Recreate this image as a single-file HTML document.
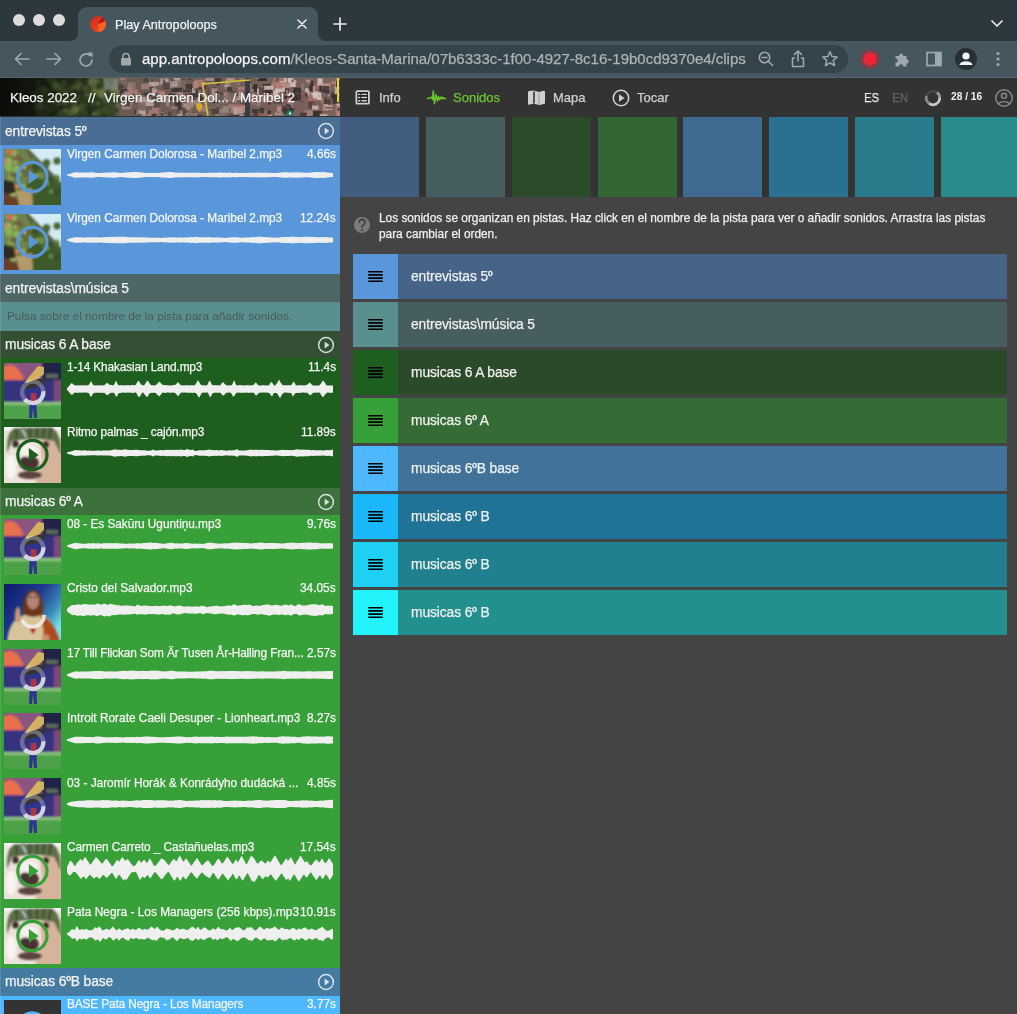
<!DOCTYPE html>
<html><head><meta charset="utf-8"><style>
html,body{margin:0;padding:0;width:1017px;height:1014px;overflow:hidden;background:#444;font-family:"Liberation Sans", sans-serif;}
.t{position:absolute;white-space:nowrap;line-height:1;-webkit-text-stroke:0.25px currentColor;will-change:transform;}
.o{font-size:0.6em;position:relative;top:-0.55em;margin-left:0;margin-right:-0.2px;letter-spacing:0;-webkit-text-stroke:0.5px currentColor;}
.r{position:absolute;display:block;}
</style></head><body>
<svg width="0" height="0" style="position:absolute"><defs><filter id="fb05" x="-20%" y="-20%" width="140%" height="140%"><feGaussianBlur stdDeviation="0.55"/></filter></defs></svg><div class="r" style="left:0.00px;top:0.00px;width:1017.00px;height:41.00px;background:#2c383d;"></div><div class="r" style="left:0.00px;top:41.00px;width:1017.00px;height:36.00px;background:#46565f;"></div><div class="r" style="left:0.00px;top:77.00px;width:1017.00px;height:1.00px;background:#56636b;"></div><div class="r" style="left:78.00px;top:7.00px;width:240.00px;height:34.00px;background:#46565f;border-radius:9px 9px 0 0"></div><svg class="r" style="left:70.00px;top:33.00px;" width="8" height="8" viewBox="0 0 8 8"><path d="M8 0 V8 H0 A8 8 0 0 0 8 0Z" fill="#46565f"/></svg><svg class="r" style="left:318.00px;top:33.00px;" width="8" height="8" viewBox="0 0 8 8"><path d="M0 0 V8 H8 A8 8 0 0 1 0 0Z" fill="#46565f"/></svg><div class="r" style="left:13.00px;top:14.00px;width:12.00px;height:12.00px;background:#dcdcdc;border-radius:50%"></div><div class="r" style="left:33.00px;top:14.00px;width:12.00px;height:12.00px;background:#dcdcdc;border-radius:50%"></div><div class="r" style="left:53.00px;top:14.00px;width:12.00px;height:12.00px;background:#dcdcdc;border-radius:50%"></div><svg class="r" style="left:90.00px;top:16.00px;" width="16" height="16" viewBox="0 0 16 16"><defs><linearGradient id="fv" x1="0" y1="0" x2="1" y2="1"><stop offset="0" stop-color="#c9241c"/><stop offset="1" stop-color="#f0552a"/></linearGradient></defs><circle cx="8" cy="8" r="8" fill="url(#fv)"/><path d="M8 8 L15.4 5 A8 8 0 0 1 9 15.9 L8 8Z" fill="#f4621f"/><path d="M8 8 L15.4 5 A8 8 0 0 0 12 1.1Z" fill="#b5161b"/></svg><div class="t" style="left:114.50px;top:19px;font-size:12.65px;color:#eef1f3;font-weight:normal;">Play Antropoloops</div><svg class="r" style="left:297.00px;top:19.00px;" width="10" height="10" viewBox="0 0 10 10"><path d="M1 1 L9 9 M9 1 L1 9" stroke="#e8ecee" stroke-width="1.6" stroke-linecap="round"/></svg><svg class="r" style="left:333.00px;top:17.00px;" width="14" height="14" viewBox="0 0 14 14"><path d="M7 1 V13 M1 7 H13" stroke="#e8ecee" stroke-width="1.7" stroke-linecap="round"/></svg><svg class="r" style="left:990.00px;top:19.00px;" width="14" height="10" viewBox="0 0 14 10"><path d="M2 2 L7 7 L12 2" stroke="#e8ecee" stroke-width="1.7" fill="none" stroke-linecap="round" stroke-linejoin="round"/></svg><svg class="r" style="left:13.00px;top:51.00px;" width="18" height="16" viewBox="0 0 18 16"><path d="M16 8 H3 M8 2.5 L2.5 8 L8 13.5" stroke="#9da8ae" stroke-width="1.7" fill="none" stroke-linecap="round" stroke-linejoin="round"/></svg><svg class="r" style="left:45.00px;top:51.00px;" width="18" height="16" viewBox="0 0 18 16"><path d="M2 8 H15 M10 2.5 L15.5 8 L10 13.5" stroke="#9da8ae" stroke-width="1.7" fill="none" stroke-linecap="round" stroke-linejoin="round"/></svg><svg class="r" style="left:78.00px;top:51.00px;" width="17" height="17" viewBox="0 0 17 17"><path d="M14 9 A6 6 0 1 1 12 4.5" stroke="#9da8ae" stroke-width="1.7" fill="none" stroke-linecap="round"/><path d="M9.5 1.5 L14.5 1.5 L14.5 6.5 Z" fill="#9da8ae"/></svg><div class="r" style="left:109.00px;top:45.00px;width:739.00px;height:28.00px;background:#35434a;border-radius:14px"></div><svg class="r" style="left:120.00px;top:52.00px;" width="12" height="14" viewBox="0 0 12 14"><path d="M3 6 V4.5 A3 3 0 0 1 9 4.5 V6" stroke="#9da8ae" stroke-width="1.6" fill="none"/><rect x="1" y="6" width="10" height="7.5" rx="1" fill="#9da8ae"/></svg><div class="t" style="left:142px;top:51px;font-size:15px;color:#a9b4ba"><span style="color:#f1f3f4">app.antropoloops.com</span>/Kleos-Santa-Marina/07b6333c-1f00-4927-8c16-19b0cd9370e4/clips</div><svg class="r" style="left:757.00px;top:50.00px;" width="18" height="18" viewBox="0 0 18 18"><circle cx="7.5" cy="7.5" r="5.2" stroke="#9da8ae" stroke-width="1.6" fill="none"/><path d="M5 7.5 H10 M11.3 11.3 L15.5 15.5" stroke="#9da8ae" stroke-width="1.6" stroke-linecap="round"/></svg><svg class="r" style="left:789.00px;top:49.00px;" width="18" height="20" viewBox="0 0 18 20"><path d="M9 2 V12 M5.5 5.5 L9 2 L12.5 5.5 M5.5 9 H3.5 V17.5 H14.5 V9 H12.5" stroke="#9da8ae" stroke-width="1.6" fill="none" stroke-linecap="round" stroke-linejoin="round"/></svg><svg class="r" style="left:821.00px;top:50.00px;" width="18" height="18" viewBox="0 0 18 18"><path d="M9 1.8 L11.1 6.6 L16.2 7 L12.3 10.4 L13.5 15.5 L9 12.8 L4.5 15.5 L5.7 10.4 L1.8 7 L6.9 6.6 Z" stroke="#9da8ae" stroke-width="1.5" fill="none" stroke-linejoin="round"/></svg><svg class="r" style="left:860.00px;top:49.00px;" width="20" height="20" viewBox="0 0 20 20"><circle cx="10" cy="10" r="8.6" fill="none" stroke="#b8263a" stroke-width="1.3"/><circle cx="10" cy="10" r="6.8" fill="#ee2334"/></svg><svg class="r" style="left:893.00px;top:50.00px;" width="18" height="18" viewBox="0 0 18 18"><path d="M2.5 6 H6 A2.2 2.2 0 1 1 10.4 6 H13.5 V9.2 A2.2 2.2 0 1 1 13.5 13.6 V16.5 H10.2 A2.2 2.2 0 1 0 5.8 16.5 H2.5 V12.8 A2.2 2.2 0 1 0 2.5 8.4 Z" fill="#9da8ae"/></svg><svg class="r" style="left:925.00px;top:50.00px;" width="18" height="18" viewBox="0 0 18 18"><rect x="2" y="2.5" width="14" height="13" fill="none" stroke="#9da8ae" stroke-width="1.7"/><rect x="10" y="2.5" width="6" height="13" fill="#9da8ae"/></svg><svg class="r" style="left:955.00px;top:48.00px;" width="22" height="22" viewBox="0 0 22 22"><circle cx="11" cy="11" r="11" fill="#263036"/><circle cx="11" cy="8" r="3.6" fill="#f1f3f4"/><path d="M4.5 16.5 A7 5 0 0 1 17.5 16.5 V17 H4.5Z" fill="#f1f3f4"/></svg><svg class="r" style="left:994.00px;top:50.00px;" width="8" height="18" viewBox="0 0 8 18"><circle cx="4" cy="3.5" r="1.6" fill="#9da8ae"/><circle cx="4" cy="9" r="1.6" fill="#9da8ae"/><circle cx="4" cy="14.5" r="1.6" fill="#9da8ae"/></svg><div class="r" style="left:0.00px;top:78.00px;width:1017.00px;height:936.00px;background:#444444;"></div><div class="r" style="left:340.00px;top:78.00px;width:677.00px;height:39.00px;background:#333333;"></div><svg class="r" style="left:354.00px;top:89.00px;" width="17" height="17" viewBox="0 0 17 17"><rect x="2.4" y="2.2" width="12.5" height="12.5" rx="1" fill="#202020" stroke="#d0d0d0" stroke-width="1.8"/><path d="M4.6 5.4 H5.8 M4.6 8.5 H5.8 M4.6 11.7 H5.8 M7.9 5.4 H12.4 M7.9 8.5 H12.4 M7.9 11.7 H12.4" stroke="#d0d0d0" stroke-width="1.4" stroke-linecap="round"/></svg><div class="t" style="left:378.60px;top:91px;font-size:13px;color:#d0d0d0;font-weight:normal;">Info</div><svg class="r" style="left:427.00px;top:88.00px;" width="20" height="18" viewBox="0 0 20 18"><path d="M0.3 10.4 L3 9.9 L4.6 9.2 L5.5 11.4 L6.3 3 L7.4 15.6 L9 6.6 L10.4 13 L11.5 8.6 L12.5 11.6 L14 9 L15 10.9 L16 9.3 L17 10.6 L18.6 10.4" stroke="#6cc62f" stroke-width="1.5" fill="none" stroke-linejoin="round" stroke-linecap="round"/></svg><div class="t" style="left:452.70px;top:91px;font-size:13px;color:#6cc62f;font-weight:normal;">Sonidos</div><svg class="r" style="left:527.00px;top:89.00px;" width="19" height="17" viewBox="0 0 19 17"><path d="M1 3.2 Q1 2.2 2 2 L6.5 1.5 L12 3 L16.5 1.7 Q18 1.5 18 2.7 V14 Q18 14.8 17 15 L12 16 L6.5 14.5 L2 15.8 Q1 16 1 15 Z" fill="#d0d0d0"/><path d="M7 2.5 V14.2" stroke="#333" stroke-width="1.6"/><path d="M12 3.5 V15.3" stroke="#8a8a8a" stroke-width="0.8"/></svg><div class="t" style="left:552.50px;top:91px;font-size:13px;color:#d0d0d0;font-weight:normal;">Mapa</div><svg class="r" style="left:612.00px;top:89.00px;" width="18" height="18" viewBox="0 0 18 18"><circle cx="9" cy="9" r="7.7" fill="none" stroke="#d0d0d0" stroke-width="1.6"/><path d="M7 5.3 L12.5 9 L7 12.7Z" fill="#d0d0d0"/></svg><div class="t" style="left:637.40px;top:91px;font-size:13px;color:#d0d0d0;font-weight:normal;">Tocar</div><div class="t" style="left:863.50px;top:91px;font-size:13.4px;color:#eeeeee;font-weight:normal;transform:scaleX(0.84);transform-origin:0 0">ES</div><div class="t" style="left:892.40px;top:91px;font-size:13.4px;color:#666666;font-weight:normal;transform:scaleX(0.86);transform-origin:0 0">EN</div><svg class="r" style="left:924.00px;top:89.00px;" width="18" height="18" viewBox="0 0 18 18"><circle cx="9" cy="9" r="6.7" fill="none" stroke="#4a4a4a" stroke-width="2.6"/><path d="M15.7 9 A6.7 6.7 0 0 1 5 14.4" fill="none" stroke="#c8c8c8" stroke-width="2.6"/><path d="M5 14.4 A6.7 6.7 0 0 1 2.5 7" fill="none" stroke="#8a8a8a" stroke-width="2.6"/><path d="M15.7 9 A6.7 6.7 0 0 0 13 3.5" fill="none" stroke="#9a9a9a" stroke-width="2.6"/></svg><div class="t" style="left:951.00px;top:92px;font-size:10.2px;color:#f0f0f0;font-weight:bold;-webkit-text-stroke:0">28 / 16</div><svg class="r" style="left:994.00px;top:88.00px;" width="20" height="20" viewBox="0 0 20 20"><circle cx="10" cy="10" r="8.2" fill="none" stroke="#8a8a8a" stroke-width="1.4"/><circle cx="10" cy="7.8" r="2.6" fill="none" stroke="#8a8a8a" stroke-width="1.4"/><path d="M4.5 15.5 A6.5 4 0 0 1 15.5 15.5" fill="none" stroke="#8a8a8a" stroke-width="1.4"/></svg><div class="r" style="left:340.00px;top:117.00px;width:677.00px;height:80.00px;background:#333333;"></div><div class="r" style="left:340.00px;top:117.00px;width:79.00px;height:80.00px;background:#435d80;"></div><div class="r" style="left:425.87px;top:117.00px;width:79.00px;height:80.00px;background:#445d5f;"></div><div class="r" style="left:511.74px;top:117.00px;width:79.00px;height:80.00px;background:#2c4b2b;"></div><div class="r" style="left:597.61px;top:117.00px;width:79.00px;height:80.00px;background:#336634;"></div><div class="r" style="left:683.48px;top:117.00px;width:79.00px;height:80.00px;background:#3e6b8f;"></div><div class="r" style="left:769.35px;top:117.00px;width:79.00px;height:80.00px;background:#2a7090;"></div><div class="r" style="left:855.22px;top:117.00px;width:79.00px;height:80.00px;background:#2a7c8c;"></div><div class="r" style="left:941.09px;top:117.00px;width:79.00px;height:80.00px;background:#2a8a8c;"></div><svg class="r" style="left:354.40px;top:217.40px;" width="16" height="16" viewBox="0 0 16 16"><circle cx="8" cy="8" r="8" fill="#7a7a7a"/><path d="M5.3 5.2 A2.8 2.8 0 1 1 9.6 7.6 Q8 8.6 8 10.3" fill="none" stroke="#3c3c3c" stroke-width="1.6" stroke-linecap="round"/><circle cx="8" cy="13" r="1" fill="#3c3c3c"/></svg><div class="t" style="left:378.50px;top:213px;font-size:11.85px;color:#f0f0f0;font-weight:normal;">Los sonidos se organizan en pistas. Haz click en el nombre de la pista para ver o añadir sonidos. Arrastra las pistas</div><div class="t" style="left:378.50px;top:229px;font-size:11.85px;color:#f0f0f0;font-weight:normal;">para cambiar el orden.</div><div class="r" style="left:353.00px;top:254.00px;width:45.00px;height:45.00px;background:#5a97da;"></div><div class="r" style="left:398.00px;top:254.00px;width:609.00px;height:45.00px;background:#456487;"></div><svg class="r" style="left:367.00px;top:270.00px;" width="17" height="13" viewBox="0 0 17 13"><path d="M1.8 1.70 H15.2" stroke="#000" stroke-width="1.6" stroke-linecap="round"/><path d="M1.8 4.90 H15.2" stroke="#000" stroke-width="1.6" stroke-linecap="round"/><path d="M1.8 8.10 H15.2" stroke="#000" stroke-width="1.6" stroke-linecap="round"/><path d="M1.8 11.30 H15.2" stroke="#000" stroke-width="1.6" stroke-linecap="round"/></svg><div class="t" style="left:410.70px;top:270px;font-size:13.8px;color:#f0f0f0;font-weight:normal;letter-spacing:-0.09px">entrevistas 5<span class="o">o</span></div><div class="r" style="left:353.00px;top:302.00px;width:45.00px;height:45.00px;background:#5a8f8f;"></div><div class="r" style="left:398.00px;top:302.00px;width:609.00px;height:45.00px;background:#475e60;"></div><svg class="r" style="left:367.00px;top:318.00px;" width="17" height="13" viewBox="0 0 17 13"><path d="M1.8 1.70 H15.2" stroke="#000" stroke-width="1.6" stroke-linecap="round"/><path d="M1.8 4.90 H15.2" stroke="#000" stroke-width="1.6" stroke-linecap="round"/><path d="M1.8 8.10 H15.2" stroke="#000" stroke-width="1.6" stroke-linecap="round"/><path d="M1.8 11.30 H15.2" stroke="#000" stroke-width="1.6" stroke-linecap="round"/></svg><div class="t" style="left:410.70px;top:318px;font-size:13.8px;color:#f0f0f0;font-weight:normal;letter-spacing:-0.09px">entrevistas\música 5</div><div class="r" style="left:353.00px;top:350.00px;width:45.00px;height:45.00px;background:#1e5e1e;"></div><div class="r" style="left:398.00px;top:350.00px;width:609.00px;height:45.00px;background:#2a4a2a;"></div><svg class="r" style="left:367.00px;top:366.00px;" width="17" height="13" viewBox="0 0 17 13"><path d="M1.8 1.70 H15.2" stroke="#000" stroke-width="1.6" stroke-linecap="round"/><path d="M1.8 4.90 H15.2" stroke="#000" stroke-width="1.6" stroke-linecap="round"/><path d="M1.8 8.10 H15.2" stroke="#000" stroke-width="1.6" stroke-linecap="round"/><path d="M1.8 11.30 H15.2" stroke="#000" stroke-width="1.6" stroke-linecap="round"/></svg><div class="t" style="left:410.70px;top:366px;font-size:13.8px;color:#f0f0f0;font-weight:normal;letter-spacing:-0.09px">musicas 6 A base</div><div class="r" style="left:353.00px;top:398.00px;width:45.00px;height:45.00px;background:#38a038;"></div><div class="r" style="left:398.00px;top:398.00px;width:609.00px;height:45.00px;background:#356b35;"></div><svg class="r" style="left:367.00px;top:414.00px;" width="17" height="13" viewBox="0 0 17 13"><path d="M1.8 1.70 H15.2" stroke="#000" stroke-width="1.6" stroke-linecap="round"/><path d="M1.8 4.90 H15.2" stroke="#000" stroke-width="1.6" stroke-linecap="round"/><path d="M1.8 8.10 H15.2" stroke="#000" stroke-width="1.6" stroke-linecap="round"/><path d="M1.8 11.30 H15.2" stroke="#000" stroke-width="1.6" stroke-linecap="round"/></svg><div class="t" style="left:410.70px;top:414px;font-size:13.8px;color:#f0f0f0;font-weight:normal;letter-spacing:-0.09px">musicas 6<span class="o">o</span> A</div><div class="r" style="left:353.00px;top:446.00px;width:45.00px;height:45.00px;background:#4db8ff;"></div><div class="r" style="left:398.00px;top:446.00px;width:609.00px;height:45.00px;background:#41739a;"></div><svg class="r" style="left:367.00px;top:462.00px;" width="17" height="13" viewBox="0 0 17 13"><path d="M1.8 1.70 H15.2" stroke="#000" stroke-width="1.6" stroke-linecap="round"/><path d="M1.8 4.90 H15.2" stroke="#000" stroke-width="1.6" stroke-linecap="round"/><path d="M1.8 8.10 H15.2" stroke="#000" stroke-width="1.6" stroke-linecap="round"/><path d="M1.8 11.30 H15.2" stroke="#000" stroke-width="1.6" stroke-linecap="round"/></svg><div class="t" style="left:410.70px;top:462px;font-size:13.8px;color:#f0f0f0;font-weight:normal;letter-spacing:-0.09px">musicas 6<span class="o">o</span>B base</div><div class="r" style="left:353.00px;top:494.00px;width:45.00px;height:45.00px;background:#1ab8f8;"></div><div class="r" style="left:398.00px;top:494.00px;width:609.00px;height:45.00px;background:#1f7396;"></div><svg class="r" style="left:367.00px;top:510.00px;" width="17" height="13" viewBox="0 0 17 13"><path d="M1.8 1.70 H15.2" stroke="#000" stroke-width="1.6" stroke-linecap="round"/><path d="M1.8 4.90 H15.2" stroke="#000" stroke-width="1.6" stroke-linecap="round"/><path d="M1.8 8.10 H15.2" stroke="#000" stroke-width="1.6" stroke-linecap="round"/><path d="M1.8 11.30 H15.2" stroke="#000" stroke-width="1.6" stroke-linecap="round"/></svg><div class="t" style="left:410.70px;top:510px;font-size:13.8px;color:#f0f0f0;font-weight:normal;letter-spacing:-0.09px">musicas 6<span class="o">o</span> B</div><div class="r" style="left:353.00px;top:542.00px;width:45.00px;height:45.00px;background:#1fd0f5;"></div><div class="r" style="left:398.00px;top:542.00px;width:609.00px;height:45.00px;background:#20808f;"></div><svg class="r" style="left:367.00px;top:558.00px;" width="17" height="13" viewBox="0 0 17 13"><path d="M1.8 1.70 H15.2" stroke="#000" stroke-width="1.6" stroke-linecap="round"/><path d="M1.8 4.90 H15.2" stroke="#000" stroke-width="1.6" stroke-linecap="round"/><path d="M1.8 8.10 H15.2" stroke="#000" stroke-width="1.6" stroke-linecap="round"/><path d="M1.8 11.30 H15.2" stroke="#000" stroke-width="1.6" stroke-linecap="round"/></svg><div class="t" style="left:410.70px;top:558px;font-size:13.8px;color:#f0f0f0;font-weight:normal;letter-spacing:-0.09px">musicas 6<span class="o">o</span> B</div><div class="r" style="left:353.00px;top:590.00px;width:45.00px;height:45.00px;background:#22f2fa;"></div><div class="r" style="left:398.00px;top:590.00px;width:609.00px;height:45.00px;background:#21908f;"></div><svg class="r" style="left:367.00px;top:606.00px;" width="17" height="13" viewBox="0 0 17 13"><path d="M1.8 1.70 H15.2" stroke="#000" stroke-width="1.6" stroke-linecap="round"/><path d="M1.8 4.90 H15.2" stroke="#000" stroke-width="1.6" stroke-linecap="round"/><path d="M1.8 8.10 H15.2" stroke="#000" stroke-width="1.6" stroke-linecap="round"/><path d="M1.8 11.30 H15.2" stroke="#000" stroke-width="1.6" stroke-linecap="round"/></svg><div class="t" style="left:410.70px;top:606px;font-size:13.8px;color:#f0f0f0;font-weight:normal;letter-spacing:-0.09px">musicas 6<span class="o">o</span> B</div><svg class="r" style="left:0;top:78px" width="340" height="38" viewBox="0 0 340 38">
<defs><filter id="hb" x="0" y="0" width="100%" height="100%"><feGaussianBlur stdDeviation="0.7"/></filter>
<filter id="hb2" x="-10%" y="-10%" width="120%" height="120%"><feGaussianBlur stdDeviation="1.2"/></filter>
<linearGradient id="hg" x1="0" y1="0" x2="1" y2="0"><stop offset="0" stop-color="#0a0b09"/><stop offset="0.12" stop-color="#151a10"/><stop offset="0.2" stop-color="#1e2616"/><stop offset="0.33" stop-color="#34402a"/><stop offset="0.35" stop-color="#6a5a52"/><stop offset="1" stop-color="#7a635c"/></linearGradient></defs>
<rect width="340" height="38" fill="url(#hg)"/><g filter="url(#hb2)"><circle cx="55.2" cy="20.7" r="2.8" fill="#6a7a44" opacity="0.35"/><circle cx="75.3" cy="22.1" r="3.6" fill="#48582e" opacity="0.55"/><circle cx="57.0" cy="8.9" r="5.0" fill="#48582e" opacity="0.37"/><circle cx="81.0" cy="20.9" r="2.9" fill="#2a3a1c" opacity="0.61"/><circle cx="54.7" cy="5.8" r="4.7" fill="#48582e" opacity="0.35"/><circle cx="98.0" cy="25.5" r="1.7" fill="#6a7a44" opacity="0.78"/><circle cx="38.6" cy="29.6" r="4.4" fill="#5a6a3a" opacity="0.20"/><circle cx="75.2" cy="27.3" r="4.6" fill="#1e2a14" opacity="0.55"/><circle cx="102.0" cy="16.2" r="4.0" fill="#6a7a44" opacity="0.80"/><circle cx="72.8" cy="35.6" r="4.6" fill="#3a4a26" opacity="0.53"/><circle cx="38.1" cy="18.8" r="2.4" fill="#1e2a14" opacity="0.20"/><circle cx="72.1" cy="23.8" r="2.6" fill="#6a7a44" opacity="0.52"/><circle cx="105.8" cy="21.8" r="3.4" fill="#48582e" opacity="0.80"/><circle cx="84.7" cy="34.4" r="3.9" fill="#3a4a26" opacity="0.65"/><circle cx="107.8" cy="37.7" r="3.8" fill="#2a3a1c" opacity="0.80"/><circle cx="94.4" cy="12.4" r="3.4" fill="#6a7a44" opacity="0.74"/><circle cx="83.4" cy="27.1" r="2.2" fill="#6a7a44" opacity="0.63"/><circle cx="57.7" cy="4.7" r="3.2" fill="#1e2a14" opacity="0.38"/><circle cx="119.1" cy="3.4" r="4.3" fill="#48582e" opacity="0.80"/><circle cx="111.3" cy="0.8" r="3.0" fill="#48582e" opacity="0.80"/><circle cx="109.2" cy="1.7" r="3.7" fill="#3a4a26" opacity="0.80"/><circle cx="67.1" cy="22.3" r="3.4" fill="#5a6a3a" opacity="0.47"/><circle cx="78.0" cy="37.9" r="2.6" fill="#3a4a26" opacity="0.58"/><circle cx="44.2" cy="20.4" r="4.8" fill="#48582e" opacity="0.24"/><circle cx="59.8" cy="10.0" r="3.9" fill="#5a6a3a" opacity="0.40"/><circle cx="61.7" cy="36.4" r="4.6" fill="#48582e" opacity="0.42"/><circle cx="67.0" cy="33.1" r="2.9" fill="#6a7a44" opacity="0.47"/><circle cx="92.9" cy="3.9" r="4.9" fill="#6a7a44" opacity="0.73"/><circle cx="58.1" cy="24.1" r="4.0" fill="#5a6a3a" opacity="0.38"/><circle cx="72.2" cy="9.8" r="2.6" fill="#5a6a3a" opacity="0.52"/><circle cx="36.0" cy="15.8" r="3.5" fill="#3a4a26" opacity="0.20"/><circle cx="67.0" cy="22.4" r="2.0" fill="#1e2a14" opacity="0.47"/><circle cx="88.3" cy="17.7" r="3.9" fill="#5a6a3a" opacity="0.68"/><circle cx="86.8" cy="10.6" r="3.2" fill="#6a7a44" opacity="0.67"/><circle cx="40.1" cy="25.7" r="4.9" fill="#5a6a3a" opacity="0.20"/><circle cx="88.4" cy="11.3" r="3.6" fill="#2a3a1c" opacity="0.68"/><circle cx="65.9" cy="11.9" r="2.8" fill="#6a7a44" opacity="0.46"/><circle cx="57.5" cy="29.9" r="1.9" fill="#3a4a26" opacity="0.37"/><circle cx="117.6" cy="26.0" r="2.0" fill="#6a7a44" opacity="0.80"/><circle cx="53.9" cy="30.5" r="2.3" fill="#2a3a1c" opacity="0.34"/><circle cx="92.6" cy="24.7" r="1.8" fill="#6a7a44" opacity="0.73"/><circle cx="62.4" cy="12.7" r="4.4" fill="#48582e" opacity="0.42"/><circle cx="103.8" cy="36.5" r="1.8" fill="#1e2a14" opacity="0.80"/><circle cx="90.3" cy="33.6" r="3.1" fill="#2a3a1c" opacity="0.70"/><circle cx="101.9" cy="1.3" r="4.9" fill="#5a6a3a" opacity="0.80"/><circle cx="103.6" cy="31.9" r="2.1" fill="#5a6a3a" opacity="0.80"/><circle cx="63.9" cy="31.5" r="1.8" fill="#6a7a44" opacity="0.44"/><circle cx="64.3" cy="4.9" r="2.5" fill="#5a6a3a" opacity="0.44"/><circle cx="74.5" cy="24.1" r="2.5" fill="#6a7a44" opacity="0.55"/><circle cx="69.8" cy="35.0" r="2.0" fill="#3a4a26" opacity="0.50"/><circle cx="75.6" cy="31.6" r="3.7" fill="#6a7a44" opacity="0.56"/><circle cx="71.9" cy="36.1" r="4.7" fill="#2a3a1c" opacity="0.52"/><circle cx="37.7" cy="17.4" r="4.1" fill="#1e2a14" opacity="0.20"/><circle cx="79.1" cy="11.0" r="2.7" fill="#2a3a1c" opacity="0.59"/><circle cx="108.2" cy="32.6" r="4.9" fill="#3a4a26" opacity="0.80"/><circle cx="103.9" cy="1.7" r="4.7" fill="#1e2a14" opacity="0.80"/><circle cx="78.5" cy="7.5" r="4.6" fill="#48582e" opacity="0.59"/><circle cx="84.0" cy="0.5" r="4.1" fill="#2a3a1c" opacity="0.64"/><circle cx="77.8" cy="9.1" r="1.6" fill="#6a7a44" opacity="0.58"/><circle cx="70.2" cy="35.7" r="3.6" fill="#5a6a3a" opacity="0.50"/><circle cx="45.7" cy="36.9" r="3.4" fill="#3a4a26" opacity="0.26"/><circle cx="64.9" cy="7.5" r="3.4" fill="#3a4a26" opacity="0.45"/><circle cx="49.6" cy="30.1" r="4.7" fill="#2a3a1c" opacity="0.30"/><circle cx="105.0" cy="0.3" r="3.7" fill="#48582e" opacity="0.80"/><circle cx="39.2" cy="10.3" r="2.4" fill="#6a7a44" opacity="0.20"/><circle cx="79.2" cy="1.9" r="2.6" fill="#3a4a26" opacity="0.59"/><circle cx="107.8" cy="29.5" r="1.7" fill="#3a4a26" opacity="0.80"/><circle cx="40.8" cy="37.0" r="4.5" fill="#3a4a26" opacity="0.21"/><circle cx="78.8" cy="18.6" r="2.0" fill="#3a4a26" opacity="0.59"/><circle cx="64.9" cy="24.6" r="3.6" fill="#5a6a3a" opacity="0.45"/><circle cx="57.5" cy="37.5" r="3.0" fill="#2a3a1c" opacity="0.38"/><circle cx="82.2" cy="27.2" r="2.8" fill="#3a4a26" opacity="0.62"/><circle cx="83.2" cy="1.6" r="3.1" fill="#1e2a14" opacity="0.63"/><circle cx="101.5" cy="14.5" r="4.3" fill="#6a7a44" opacity="0.80"/><circle cx="110.4" cy="2.0" r="3.7" fill="#1e2a14" opacity="0.80"/><circle cx="61.8" cy="36.1" r="3.0" fill="#3a4a26" opacity="0.42"/><circle cx="55.8" cy="20.4" r="3.9" fill="#3a4a26" opacity="0.36"/><circle cx="103.3" cy="8.5" r="2.0" fill="#3a4a26" opacity="0.80"/><circle cx="114.6" cy="14.2" r="4.6" fill="#5a6a3a" opacity="0.80"/><circle cx="45.3" cy="26.2" r="4.8" fill="#1e2a14" opacity="0.25"/><circle cx="91.3" cy="33.7" r="4.3" fill="#1e2a14" opacity="0.71"/><circle cx="44.2" cy="12.1" r="3.4" fill="#6a7a44" opacity="0.24"/><circle cx="95.9" cy="18.0" r="2.3" fill="#48582e" opacity="0.76"/><circle cx="38.8" cy="3.5" r="1.8" fill="#48582e" opacity="0.20"/><circle cx="50.2" cy="0.9" r="4.4" fill="#3a4a26" opacity="0.30"/><circle cx="37.2" cy="4.4" r="3.2" fill="#1e2a14" opacity="0.20"/><circle cx="116.0" cy="22.0" r="4.3" fill="#3a4a26" opacity="0.80"/><circle cx="119.7" cy="21.4" r="3.4" fill="#2a3a1c" opacity="0.80"/><circle cx="44.1" cy="28.5" r="4.8" fill="#3a4a26" opacity="0.24"/><circle cx="81.8" cy="33.0" r="2.1" fill="#3a4a26" opacity="0.62"/><circle cx="55.6" cy="6.8" r="2.4" fill="#6a7a44" opacity="0.36"/><circle cx="94.5" cy="35.8" r="2.4" fill="#6a7a44" opacity="0.75"/><circle cx="68.7" cy="13.3" r="3.0" fill="#3a4a26" opacity="0.49"/><circle cx="66.9" cy="8.9" r="4.8" fill="#1e2a14" opacity="0.47"/><circle cx="117.2" cy="15.8" r="3.5" fill="#6a7a44" opacity="0.80"/><circle cx="92.3" cy="19.6" r="3.2" fill="#1e2a14" opacity="0.72"/><circle cx="69.1" cy="33.7" r="2.1" fill="#48582e" opacity="0.49"/><circle cx="98.6" cy="34.8" r="3.3" fill="#48582e" opacity="0.79"/><circle cx="84.8" cy="32.6" r="2.0" fill="#2a3a1c" opacity="0.65"/><circle cx="47.5" cy="19.6" r="4.8" fill="#1e2a14" opacity="0.27"/><circle cx="80.7" cy="29.6" r="3.8" fill="#48582e" opacity="0.61"/><circle cx="85.6" cy="22.2" r="4.9" fill="#2a3a1c" opacity="0.66"/><circle cx="61.1" cy="10.2" r="4.3" fill="#2a3a1c" opacity="0.41"/><circle cx="49.6" cy="13.7" r="2.6" fill="#2a3a1c" opacity="0.30"/><circle cx="70.6" cy="26.5" r="4.0" fill="#2a3a1c" opacity="0.51"/><circle cx="74.8" cy="31.7" r="4.4" fill="#6a7a44" opacity="0.55"/><circle cx="37.4" cy="37.7" r="1.8" fill="#48582e" opacity="0.20"/><circle cx="101.6" cy="33.5" r="1.7" fill="#2a3a1c" opacity="0.80"/><circle cx="110.7" cy="24.6" r="4.2" fill="#3a4a26" opacity="0.80"/><circle cx="116.5" cy="32.4" r="2.3" fill="#2a3a1c" opacity="0.80"/><rect x="104" y="0" width="14" height="12" fill="#a8aca4" opacity="0.55"/></g><g filter="url(#hb)"><rect x="290.2" y="2.8" width="7.0" height="6.1" fill="#a87a70" opacity="0.85"/><rect x="317.7" y="7.7" width="8.9" height="3.9" fill="#976a60" opacity="0.85"/><rect x="138.2" y="30.6" width="2.9" height="3.6" fill="#b89088" opacity="0.85"/><rect x="126.0" y="16.0" width="7.9" height="4.0" fill="#6a5e58" opacity="0.85"/><rect x="192.3" y="15.3" width="5.9" height="3.3" fill="#4a4040" opacity="0.85"/><rect x="282.8" y="17.6" width="3.0" height="3.9" fill="#7a5a53" opacity="0.85"/><rect x="134.9" y="15.2" width="5.5" height="5.2" fill="#b89088" opacity="0.85"/><rect x="139.5" y="36.5" width="5.0" height="6.6" fill="#9a8a80" opacity="0.85"/><rect x="183.6" y="25.4" width="7.2" height="6.8" fill="#b89088" opacity="0.85"/><rect x="141.8" y="36.7" width="4.7" height="5.4" fill="#c0a8a0" opacity="0.85"/><rect x="143.2" y="17.7" width="4.8" height="6.3" fill="#b07a74" opacity="0.85"/><rect x="279.6" y="28.2" width="7.2" height="6.4" fill="#4e3a38" opacity="0.85"/><rect x="157.8" y="34.4" width="7.2" height="2.7" fill="#c0a8a0" opacity="0.85"/><rect x="149.4" y="10.9" width="7.8" height="5.6" fill="#c0a8a0" opacity="0.85"/><rect x="184.7" y="4.8" width="5.9" height="6.7" fill="#8a7a70" opacity="0.85"/><rect x="141.8" y="4.6" width="6.4" height="5.5" fill="#7a6a60" opacity="0.85"/><rect x="197.7" y="8.2" width="5.1" height="7.2" fill="#6a5e58" opacity="0.85"/><rect x="224.3" y="8.4" width="7.6" height="5.1" fill="#3a3434" opacity="0.85"/><rect x="327.8" y="15.8" width="8.5" height="2.4" fill="#b07a70" opacity="0.85"/><rect x="306.0" y="1.7" width="4.2" height="2.6" fill="#c09088" opacity="0.85"/><rect x="243.3" y="35.2" width="2.9" height="6.2" fill="#4a4040" opacity="0.85"/><rect x="210.5" y="28.2" width="8.5" height="6.5" fill="#4a4040" opacity="0.85"/><rect x="253.0" y="33.1" width="8.4" height="5.3" fill="#4e3a38" opacity="0.85"/><rect x="244.2" y="5.5" width="4.0" height="6.7" fill="#6a5e58" opacity="0.85"/><rect x="305.0" y="15.7" width="5.3" height="6.9" fill="#2e2a2a" opacity="0.85"/><rect x="240.7" y="21.5" width="7.1" height="7.9" fill="#b07a74" opacity="0.85"/><rect x="274.9" y="34.6" width="7.3" height="2.2" fill="#c8b8b0" opacity="0.85"/><rect x="279.4" y="-2.9" width="8.2" height="6.0" fill="#b07a70" opacity="0.85"/><rect x="156.4" y="23.3" width="3.6" height="6.7" fill="#5a4a48" opacity="0.85"/><rect x="126.2" y="18.0" width="7.2" height="4.7" fill="#4a4040" opacity="0.85"/><rect x="180.9" y="24.6" width="3.2" height="4.8" fill="#8a7a70" opacity="0.85"/><rect x="256.4" y="-0.9" width="4.9" height="3.4" fill="#c09088" opacity="0.85"/><rect x="228.7" y="-2.2" width="4.7" height="4.0" fill="#3a3434" opacity="0.85"/><rect x="272.2" y="2.6" width="8.9" height="5.6" fill="#a87a70" opacity="0.85"/><rect x="276.9" y="28.1" width="4.7" height="6.8" fill="#c09088" opacity="0.85"/><rect x="309.2" y="15.4" width="8.1" height="4.9" fill="#c09088" opacity="0.85"/><rect x="292.7" y="14.2" width="8.8" height="6.2" fill="#976a60" opacity="0.85"/><rect x="228.4" y="26.4" width="6.3" height="4.5" fill="#b07a74" opacity="0.85"/><rect x="226.6" y="-2.0" width="5.7" height="6.1" fill="#9a8a80" opacity="0.85"/><rect x="158.1" y="34.8" width="7.8" height="4.2" fill="#3a3434" opacity="0.85"/><rect x="217.4" y="12.2" width="5.2" height="7.8" fill="#5a4a48" opacity="0.85"/><rect x="175.4" y="12.5" width="8.8" height="5.2" fill="#a08078" opacity="0.85"/><rect x="164.5" y="4.2" width="5.2" height="3.0" fill="#6a5e58" opacity="0.85"/><rect x="148.9" y="22.6" width="5.5" height="3.1" fill="#6a5e58" opacity="0.85"/><rect x="207.5" y="10.3" width="2.3" height="6.3" fill="#5a4a48" opacity="0.85"/><rect x="207.5" y="13.7" width="2.2" height="7.8" fill="#5a4a48" opacity="0.85"/><rect x="171.6" y="13.3" width="3.5" height="4.0" fill="#8a7a70" opacity="0.85"/><rect x="194.9" y="2.2" width="2.4" height="6.4" fill="#b89088" opacity="0.85"/><rect x="335.8" y="36.6" width="8.3" height="7.8" fill="#b07a70" opacity="0.85"/><rect x="173.5" y="8.2" width="8.5" height="5.8" fill="#3a3434" opacity="0.85"/><rect x="188.4" y="-0.6" width="5.5" height="2.5" fill="#4a4040" opacity="0.85"/><rect x="118.8" y="-1.7" width="2.7" height="3.0" fill="#6a5e58" opacity="0.85"/><rect x="225.0" y="4.9" width="6.1" height="4.0" fill="#9a8a80" opacity="0.85"/><rect x="193.5" y="17.1" width="4.8" height="6.0" fill="#7a6a60" opacity="0.85"/><rect x="185.6" y="22.5" width="9.6" height="2.5" fill="#b89088" opacity="0.85"/><rect x="158.9" y="14.3" width="6.1" height="5.3" fill="#c0a8a0" opacity="0.85"/><rect x="269.0" y="36.0" width="3.4" height="6.4" fill="#976a60" opacity="0.85"/><rect x="303.5" y="20.2" width="9.4" height="4.2" fill="#976a60" opacity="0.85"/><rect x="215.3" y="15.7" width="7.6" height="4.1" fill="#a08078" opacity="0.85"/><rect x="230.6" y="28.6" width="9.3" height="6.2" fill="#9a8a80" opacity="0.85"/><rect x="127.5" y="4.2" width="8.0" height="6.9" fill="#8a7a70" opacity="0.85"/><rect x="286.4" y="25.4" width="2.8" height="3.4" fill="#3a3434" opacity="0.85"/><rect x="130.5" y="22.7" width="2.4" height="4.8" fill="#b07a74" opacity="0.85"/><rect x="192.1" y="12.5" width="2.6" height="4.4" fill="#8a7a70" opacity="0.85"/><rect x="193.1" y="10.1" width="5.6" height="6.9" fill="#5a4a48" opacity="0.85"/><rect x="171.4" y="-0.9" width="3.2" height="5.9" fill="#4a4040" opacity="0.85"/><rect x="336.7" y="1.7" width="4.3" height="3.3" fill="#8a8078" opacity="0.85"/><rect x="232.5" y="18.2" width="9.3" height="3.9" fill="#c0a8a0" opacity="0.85"/><rect x="291.6" y="16.6" width="7.0" height="2.2" fill="#c09088" opacity="0.85"/><rect x="250.8" y="33.1" width="2.8" height="7.7" fill="#7a5a53" opacity="0.85"/><rect x="137.0" y="16.5" width="3.8" height="7.0" fill="#4a4040" opacity="0.85"/><rect x="142.2" y="17.4" width="7.3" height="6.2" fill="#7a6a60" opacity="0.85"/><rect x="251.9" y="15.7" width="2.9" height="7.0" fill="#d8c8c8" opacity="0.85"/><rect x="216.5" y="12.9" width="2.9" height="2.0" fill="#b89088" opacity="0.85"/><rect x="279.6" y="0.2" width="4.8" height="4.9" fill="#c09088" opacity="0.85"/><rect x="323.1" y="25.8" width="4.9" height="6.7" fill="#c09088" opacity="0.85"/><rect x="252.5" y="6.0" width="4.8" height="8.0" fill="#2e2a2a" opacity="0.85"/><rect x="170.4" y="15.4" width="4.0" height="3.9" fill="#5a4a48" opacity="0.85"/><rect x="279.3" y="33.7" width="9.9" height="5.7" fill="#8a8078" opacity="0.85"/><rect x="307.3" y="12.4" width="3.5" height="5.7" fill="#976a60" opacity="0.85"/><rect x="225.5" y="29.5" width="5.3" height="8.0" fill="#6a5e58" opacity="0.85"/><rect x="182.8" y="36.2" width="3.5" height="2.6" fill="#a08078" opacity="0.85"/><rect x="183.3" y="18.8" width="7.1" height="2.2" fill="#5a4a48" opacity="0.85"/><rect x="179.3" y="15.2" width="4.8" height="6.5" fill="#b89088" opacity="0.85"/><rect x="149.7" y="15.7" width="9.3" height="4.7" fill="#5a4a48" opacity="0.85"/><rect x="152.0" y="29.0" width="7.6" height="7.9" fill="#b07a74" opacity="0.85"/><rect x="200.7" y="3.8" width="4.5" height="4.8" fill="#c0a8a0" opacity="0.85"/><rect x="339.7" y="6.3" width="9.7" height="3.7" fill="#a87a70" opacity="0.85"/><rect x="220.8" y="34.2" width="8.5" height="3.8" fill="#5a4a48" opacity="0.85"/><rect x="324.5" y="18.8" width="2.1" height="5.8" fill="#4e3a38" opacity="0.85"/><rect x="237.0" y="4.0" width="2.4" height="3.2" fill="#9a8a80" opacity="0.85"/><rect x="196.8" y="37.6" width="4.9" height="5.3" fill="#9a8a80" opacity="0.85"/><rect x="159.1" y="-2.4" width="5.5" height="4.0" fill="#6a5e58" opacity="0.85"/><rect x="252.0" y="31.1" width="5.6" height="3.6" fill="#3a3434" opacity="0.85"/><rect x="296.1" y="14.6" width="4.1" height="2.3" fill="#976a60" opacity="0.85"/><rect x="126.3" y="38.8" width="3.3" height="6.6" fill="#4a4040" opacity="0.85"/><rect x="172.9" y="2.7" width="8.1" height="6.7" fill="#c0a8a0" opacity="0.85"/><rect x="284.6" y="11.2" width="3.1" height="2.1" fill="#a87a70" opacity="0.85"/><rect x="121.8" y="24.0" width="9.2" height="7.4" fill="#9a8a80" opacity="0.85"/><rect x="233.7" y="28.7" width="8.9" height="7.9" fill="#c0a8a0" opacity="0.85"/><rect x="210.0" y="18.8" width="3.4" height="3.1" fill="#b07a74" opacity="0.85"/><rect x="149.0" y="32.0" width="2.8" height="6.6" fill="#9a8a80" opacity="0.85"/><rect x="219.0" y="30.7" width="5.6" height="7.8" fill="#a08078" opacity="0.85"/><rect x="246.1" y="2.9" width="2.3" height="4.9" fill="#5a4a48" opacity="0.85"/><rect x="301.7" y="36.1" width="6.9" height="2.2" fill="#d8c8c8" opacity="0.85"/><rect x="250.7" y="1.9" width="3.0" height="6.7" fill="#7a5a53" opacity="0.85"/><rect x="140.7" y="25.1" width="5.0" height="5.1" fill="#b07a74" opacity="0.85"/><rect x="217.4" y="10.1" width="4.8" height="5.9" fill="#7a6a60" opacity="0.85"/><rect x="188.2" y="8.4" width="9.6" height="7.7" fill="#3a3434" opacity="0.85"/><rect x="253.5" y="20.3" width="2.3" height="4.5" fill="#976a60" opacity="0.85"/><rect x="335.6" y="0.3" width="3.8" height="3.2" fill="#c09088" opacity="0.85"/><rect x="273.0" y="1.8" width="7.1" height="2.7" fill="#a87a70" opacity="0.85"/><rect x="327.2" y="37.9" width="7.5" height="4.6" fill="#b07a70" opacity="0.85"/><rect x="220.5" y="9.2" width="6.5" height="3.0" fill="#9a8a80" opacity="0.85"/><rect x="330.6" y="3.1" width="9.2" height="3.1" fill="#b07a70" opacity="0.85"/><rect x="267.8" y="24.2" width="3.1" height="2.3" fill="#3a3434" opacity="0.85"/><rect x="157.1" y="5.0" width="8.6" height="7.2" fill="#6a5e58" opacity="0.85"/><rect x="234.3" y="3.4" width="3.7" height="6.7" fill="#7a6a60" opacity="0.85"/><rect x="204.6" y="38.5" width="4.2" height="2.8" fill="#a08078" opacity="0.85"/><rect x="183.5" y="13.1" width="9.5" height="5.6" fill="#5a4a48" opacity="0.85"/><rect x="119.6" y="12.6" width="3.1" height="4.9" fill="#8a7a70" opacity="0.85"/><rect x="196.7" y="36.9" width="5.9" height="6.2" fill="#3a3434" opacity="0.85"/><rect x="222.9" y="28.1" width="6.2" height="7.1" fill="#9a8a80" opacity="0.85"/><rect x="244.3" y="16.5" width="6.3" height="4.7" fill="#c0a8a0" opacity="0.85"/><rect x="219.3" y="13.1" width="8.1" height="3.8" fill="#a08078" opacity="0.85"/><rect x="184.8" y="33.1" width="9.7" height="3.9" fill="#5a4a48" opacity="0.85"/><rect x="146.9" y="22.4" width="2.5" height="5.7" fill="#a08078" opacity="0.85"/><rect x="143.4" y="-2.4" width="9.0" height="6.8" fill="#4a4040" opacity="0.85"/><rect x="270.2" y="19.1" width="8.1" height="2.6" fill="#8a8078" opacity="0.85"/><rect x="247.0" y="10.7" width="6.7" height="3.3" fill="#9a8a80" opacity="0.85"/><rect x="230.4" y="12.7" width="4.5" height="4.2" fill="#4a4040" opacity="0.85"/><rect x="289.2" y="27.4" width="4.8" height="6.1" fill="#2e2a2a" opacity="0.85"/><rect x="181.7" y="38.0" width="4.2" height="2.7" fill="#c0a8a0" opacity="0.85"/><rect x="167.1" y="38.8" width="7.8" height="3.5" fill="#7a6a60" opacity="0.85"/><rect x="332.7" y="16.0" width="5.8" height="5.2" fill="#4e3a38" opacity="0.85"/><rect x="337.0" y="19.2" width="5.5" height="5.7" fill="#c09088" opacity="0.85"/><rect x="210.7" y="20.1" width="6.9" height="3.7" fill="#5a4a48" opacity="0.85"/><rect x="307.7" y="13.1" width="9.9" height="4.2" fill="#c8b8b0" opacity="0.85"/><rect x="130.3" y="17.8" width="2.9" height="6.4" fill="#7a6a60" opacity="0.85"/><rect x="275.9" y="12.2" width="4.4" height="5.0" fill="#976a60" opacity="0.85"/><rect x="215.5" y="35.1" width="7.5" height="2.6" fill="#9a8a80" opacity="0.85"/><rect x="150.5" y="6.2" width="5.0" height="5.7" fill="#a08078" opacity="0.85"/><rect x="314.5" y="5.8" width="5.5" height="3.2" fill="#a87a70" opacity="0.85"/><rect x="237.6" y="35.7" width="6.3" height="6.4" fill="#5a4a48" opacity="0.85"/><rect x="216.0" y="25.7" width="3.0" height="7.3" fill="#7a6a60" opacity="0.85"/><rect x="167.9" y="2.8" width="4.5" height="5.3" fill="#8a7a70" opacity="0.85"/><rect x="300.8" y="22.2" width="2.7" height="2.2" fill="#2e2a2a" opacity="0.85"/><rect x="203.0" y="17.6" width="9.9" height="4.8" fill="#a08078" opacity="0.85"/><rect x="204.3" y="18.5" width="5.5" height="5.8" fill="#b07a74" opacity="0.85"/><rect x="184.1" y="9.1" width="7.1" height="6.5" fill="#8a7a70" opacity="0.85"/><rect x="132.3" y="33.8" width="8.0" height="3.9" fill="#6a5e58" opacity="0.85"/><rect x="190.0" y="35.3" width="7.1" height="2.6" fill="#b07a74" opacity="0.85"/><rect x="191.6" y="14.6" width="6.7" height="7.3" fill="#5a4a48" opacity="0.85"/><rect x="262.0" y="37.2" width="2.4" height="5.1" fill="#8a8078" opacity="0.85"/><rect x="234.3" y="21.1" width="2.7" height="3.4" fill="#9a8a80" opacity="0.85"/><rect x="301.0" y="35.6" width="5.2" height="4.1" fill="#b07a70" opacity="0.85"/><rect x="264.8" y="19.2" width="3.6" height="3.8" fill="#d8c8c8" opacity="0.85"/><rect x="147.5" y="19.3" width="7.0" height="4.1" fill="#4a4040" opacity="0.85"/><rect x="308.4" y="28.0" width="3.6" height="2.4" fill="#976a60" opacity="0.85"/><rect x="308.4" y="23.4" width="5.9" height="7.1" fill="#4e3a38" opacity="0.85"/><rect x="300.7" y="36.4" width="3.0" height="7.5" fill="#976a60" opacity="0.85"/><rect x="305.0" y="10.2" width="8.0" height="4.0" fill="#c8b8b0" opacity="0.85"/><rect x="203.3" y="32.8" width="8.7" height="2.3" fill="#7a6a60" opacity="0.85"/><rect x="199.5" y="6.4" width="4.3" height="4.1" fill="#6a5e58" opacity="0.85"/><rect x="272.1" y="11.3" width="2.9" height="3.3" fill="#b07a70" opacity="0.85"/><rect x="156.4" y="4.1" width="5.9" height="3.3" fill="#b07a74" opacity="0.85"/><rect x="199.0" y="6.8" width="7.5" height="5.2" fill="#4a4040" opacity="0.85"/><rect x="237.8" y="22.1" width="7.0" height="4.7" fill="#6a5e58" opacity="0.85"/><rect x="135.5" y="19.5" width="5.7" height="2.1" fill="#a08078" opacity="0.85"/><rect x="177.6" y="34.7" width="7.5" height="3.3" fill="#c0a8a0" opacity="0.85"/><rect x="336.9" y="11.5" width="10.0" height="4.9" fill="#4e3a38" opacity="0.85"/><rect x="143.5" y="14.6" width="8.9" height="2.9" fill="#3a3434" opacity="0.85"/><rect x="141.9" y="19.2" width="8.8" height="4.9" fill="#c0a8a0" opacity="0.85"/><rect x="151.7" y="35.7" width="5.0" height="2.3" fill="#3a3434" opacity="0.85"/><rect x="300.9" y="5.5" width="2.7" height="6.6" fill="#8a8078" opacity="0.85"/><rect x="249.6" y="21.5" width="7.4" height="3.7" fill="#3a3434" opacity="0.85"/><rect x="337.4" y="32.1" width="8.0" height="3.7" fill="#a87a70" opacity="0.85"/><rect x="211.9" y="20.5" width="8.1" height="4.5" fill="#3a3434" opacity="0.85"/><rect x="243.9" y="7.5" width="7.6" height="5.4" fill="#7a6a60" opacity="0.85"/><rect x="276.3" y="10.6" width="3.3" height="7.5" fill="#b07a70" opacity="0.85"/><rect x="156.3" y="13.6" width="3.6" height="4.4" fill="#4a4040" opacity="0.85"/><rect x="199.2" y="27.4" width="6.9" height="6.2" fill="#a08078" opacity="0.85"/><rect x="230.1" y="4.0" width="2.8" height="5.2" fill="#7a6a60" opacity="0.85"/><rect x="310.8" y="18.7" width="5.2" height="2.4" fill="#7a5a53" opacity="0.85"/><rect x="269.9" y="6.7" width="4.1" height="3.3" fill="#c09088" opacity="0.85"/><rect x="223.8" y="15.2" width="4.1" height="7.8" fill="#a08078" opacity="0.85"/><rect x="176.8" y="29.8" width="9.6" height="6.0" fill="#5a4a48" opacity="0.85"/><rect x="336.8" y="30.2" width="7.9" height="7.4" fill="#c09088" opacity="0.85"/><rect x="310.8" y="2.7" width="2.7" height="7.9" fill="#2e2a2a" opacity="0.85"/><rect x="334.3" y="10.7" width="8.1" height="3.0" fill="#3a3434" opacity="0.85"/><rect x="227.0" y="38.8" width="3.1" height="7.4" fill="#9a8a80" opacity="0.85"/><rect x="283.4" y="18.2" width="7.5" height="4.6" fill="#976a60" opacity="0.85"/><rect x="175.2" y="19.9" width="6.7" height="4.3" fill="#6a5e58" opacity="0.85"/><rect x="125.0" y="15.1" width="2.0" height="6.7" fill="#a08078" opacity="0.85"/><rect x="230.1" y="37.0" width="8.8" height="6.4" fill="#3a3434" opacity="0.85"/><rect x="175.1" y="23.4" width="6.5" height="7.8" fill="#3a3434" opacity="0.85"/><rect x="163.0" y="3.7" width="9.8" height="6.4" fill="#9a8a80" opacity="0.85"/><rect x="213.0" y="9.1" width="2.9" height="4.0" fill="#4a4040" opacity="0.85"/><rect x="280.2" y="7.9" width="2.7" height="2.5" fill="#3a3434" opacity="0.85"/><rect x="148.7" y="-2.7" width="2.7" height="6.7" fill="#7a6a60" opacity="0.85"/><rect x="275.2" y="20.2" width="7.3" height="4.7" fill="#4e3a38" opacity="0.85"/><rect x="273.6" y="-2.9" width="4.3" height="6.2" fill="#4e3a38" opacity="0.85"/><rect x="119.5" y="11.1" width="7.8" height="7.0" fill="#3a3434" opacity="0.85"/><rect x="140.6" y="30.7" width="5.1" height="6.8" fill="#9a8a80" opacity="0.85"/><rect x="325.7" y="27.3" width="7.0" height="4.6" fill="#c8b8b0" opacity="0.85"/><rect x="295.6" y="11.5" width="3.8" height="4.5" fill="#c09088" opacity="0.85"/><rect x="205.8" y="38.2" width="2.9" height="6.0" fill="#5a4a48" opacity="0.85"/><rect x="182.4" y="-2.0" width="2.2" height="4.0" fill="#5a4a48" opacity="0.85"/><rect x="218.8" y="18.4" width="7.1" height="7.9" fill="#7a6a60" opacity="0.85"/><rect x="265.0" y="27.9" width="6.2" height="4.6" fill="#7a5a53" opacity="0.85"/><rect x="295.6" y="4.5" width="5.6" height="5.2" fill="#7a5a53" opacity="0.85"/><rect x="323.7" y="21.4" width="7.0" height="4.6" fill="#4e3a38" opacity="0.85"/><rect x="186.5" y="18.9" width="3.8" height="5.2" fill="#b89088" opacity="0.85"/><rect x="145.1" y="18.0" width="5.8" height="3.5" fill="#7a6a60" opacity="0.85"/><rect x="122.5" y="-2.0" width="7.0" height="2.3" fill="#c0a8a0" opacity="0.85"/><rect x="310.9" y="35.0" width="2.4" height="6.1" fill="#7a5a53" opacity="0.85"/><rect x="299.3" y="17.6" width="8.2" height="6.8" fill="#7a5a53" opacity="0.85"/><rect x="256.9" y="0.7" width="9.7" height="2.3" fill="#3a3434" opacity="0.85"/><rect x="160.5" y="0.5" width="8.0" height="5.2" fill="#c0a8a0" opacity="0.85"/><rect x="148.8" y="3.9" width="9.7" height="3.8" fill="#c0a8a0" opacity="0.85"/><rect x="119.4" y="-0.1" width="7.4" height="7.6" fill="#7a6a60" opacity="0.85"/><rect x="266.0" y="11.0" width="8.3" height="4.6" fill="#2e2a2a" opacity="0.85"/><rect x="251.6" y="-1.8" width="4.4" height="6.4" fill="#7a5a53" opacity="0.85"/><rect x="292.7" y="28.4" width="3.6" height="2.6" fill="#7a5a53" opacity="0.85"/><rect x="283.1" y="37.2" width="5.8" height="3.2" fill="#2e2a2a" opacity="0.85"/><rect x="251.2" y="24.9" width="10.0" height="2.3" fill="#976a60" opacity="0.85"/><rect x="171.6" y="4.6" width="2.8" height="3.1" fill="#c0a8a0" opacity="0.85"/><rect x="218.4" y="15.1" width="5.4" height="5.5" fill="#7a6a60" opacity="0.85"/><rect x="213.7" y="-1.3" width="7.9" height="6.5" fill="#3a3434" opacity="0.85"/><rect x="318.7" y="13.4" width="6.2" height="2.8" fill="#c8b8b0" opacity="0.85"/><rect x="288.0" y="-1.7" width="5.3" height="7.1" fill="#d8c8c8" opacity="0.85"/><rect x="288.1" y="17.1" width="5.0" height="5.0" fill="#976a60" opacity="0.85"/><rect x="254.0" y="16.9" width="2.5" height="5.4" fill="#4e3a38" opacity="0.85"/><rect x="321.1" y="5.2" width="9.1" height="6.8" fill="#c09088" opacity="0.85"/><rect x="335.4" y="2.8" width="8.2" height="7.4" fill="#c09088" opacity="0.85"/><rect x="141.1" y="6.0" width="9.3" height="5.3" fill="#a08078" opacity="0.85"/><rect x="319.2" y="15.3" width="3.2" height="3.3" fill="#3a3434" opacity="0.85"/><rect x="211.7" y="10.3" width="5.5" height="7.6" fill="#b89088" opacity="0.85"/><rect x="240.1" y="21.8" width="4.7" height="5.3" fill="#5a4a48" opacity="0.85"/><rect x="334.6" y="8.8" width="2.7" height="7.3" fill="#c8b8b0" opacity="0.85"/><rect x="307.7" y="33.6" width="4.7" height="6.4" fill="#c09088" opacity="0.85"/><rect x="192.0" y="9.7" width="3.7" height="5.3" fill="#c0a8a0" opacity="0.85"/><rect x="279.9" y="-2.9" width="7.2" height="6.9" fill="#c8b8b0" opacity="0.85"/><rect x="325.3" y="28.6" width="8.6" height="2.4" fill="#7a5a53" opacity="0.85"/><rect x="194.3" y="9.2" width="4.8" height="3.3" fill="#5a4a48" opacity="0.85"/><rect x="320.9" y="20.4" width="2.9" height="4.6" fill="#a87a70" opacity="0.85"/><rect x="236.4" y="13.6" width="6.6" height="7.0" fill="#c0a8a0" opacity="0.85"/><rect x="162.5" y="35.7" width="4.5" height="6.0" fill="#8a7a70" opacity="0.85"/><rect x="211.6" y="29.5" width="7.7" height="6.8" fill="#4a4040" opacity="0.85"/><rect x="170.8" y="28.4" width="6.9" height="2.7" fill="#a08078" opacity="0.85"/><rect x="311.5" y="11.4" width="3.4" height="4.0" fill="#c09088" opacity="0.85"/><rect x="291.0" y="22.5" width="2.5" height="7.4" fill="#8a8078" opacity="0.85"/><rect x="182.6" y="17.4" width="8.2" height="4.6" fill="#a08078" opacity="0.85"/><rect x="225.2" y="2.1" width="3.4" height="7.1" fill="#9a8a80" opacity="0.85"/><rect x="179.7" y="32.6" width="3.6" height="4.8" fill="#9a8a80" opacity="0.85"/><rect x="198.3" y="12.4" width="2.1" height="5.3" fill="#9a8a80" opacity="0.85"/><rect x="243.3" y="19.5" width="2.1" height="2.4" fill="#b89088" opacity="0.85"/><rect x="159.3" y="38.2" width="2.9" height="7.2" fill="#a08078" opacity="0.85"/><rect x="281.6" y="37.4" width="4.5" height="4.2" fill="#a87a70" opacity="0.85"/><rect x="304.3" y="32.5" width="9.0" height="7.9" fill="#a87a70" opacity="0.85"/><rect x="336.4" y="3.9" width="7.1" height="5.0" fill="#2e2a2a" opacity="0.85"/><rect x="283.2" y="30.4" width="10.0" height="6.1" fill="#3a3434" opacity="0.85"/><rect x="239.8" y="0.4" width="9.1" height="2.5" fill="#8a7a70" opacity="0.85"/><rect x="162.7" y="1.4" width="2.7" height="4.0" fill="#5a4a48" opacity="0.85"/><rect x="129.0" y="15.5" width="3.0" height="7.3" fill="#5a4a48" opacity="0.85"/><rect x="190.4" y="15.7" width="9.8" height="3.8" fill="#3a3434" opacity="0.85"/><rect x="273.0" y="-2.4" width="3.5" height="5.2" fill="#a87a70" opacity="0.85"/><rect x="166.2" y="21.6" width="3.0" height="7.1" fill="#9a8a80" opacity="0.85"/><rect x="233.3" y="14.2" width="5.8" height="5.7" fill="#b89088" opacity="0.85"/><rect x="308.8" y="8.8" width="3.9" height="3.0" fill="#2e2a2a" opacity="0.85"/><rect x="215.2" y="13.4" width="6.2" height="6.2" fill="#3a3434" opacity="0.85"/><rect x="182.8" y="11.5" width="8.0" height="3.0" fill="#3a3434" opacity="0.85"/><rect x="134.4" y="36.0" width="7.8" height="5.6" fill="#7a6a60" opacity="0.85"/><rect x="332.4" y="18.4" width="8.6" height="7.5" fill="#3a3434" opacity="0.85"/><rect x="195.9" y="22.2" width="4.9" height="7.7" fill="#b07a74" opacity="0.85"/><rect x="260.2" y="19.3" width="8.6" height="3.5" fill="#b07a70" opacity="0.85"/><rect x="236.8" y="28.3" width="8.2" height="6.5" fill="#b89088" opacity="0.85"/><rect x="137.4" y="26.0" width="8.5" height="6.7" fill="#7a6a60" opacity="0.85"/><rect x="276.0" y="5.5" width="4.1" height="2.8" fill="#8a8078" opacity="0.85"/><rect x="319.4" y="8.0" width="9.9" height="7.6" fill="#3a3434" opacity="0.85"/><rect x="330.5" y="16.1" width="6.5" height="3.7" fill="#3a3434" opacity="0.85"/><rect x="160.6" y="18.7" width="2.8" height="4.0" fill="#b89088" opacity="0.85"/><rect x="226.5" y="-1.1" width="8.3" height="3.9" fill="#b89088" opacity="0.85"/><rect x="157.6" y="16.3" width="6.5" height="3.9" fill="#c0a8a0" opacity="0.85"/><rect x="223.7" y="7.1" width="3.6" height="2.2" fill="#c0a8a0" opacity="0.85"/><rect x="134.5" y="31.5" width="3.4" height="4.8" fill="#3a3434" opacity="0.85"/><rect x="138.9" y="32.8" width="6.6" height="3.4" fill="#c0a8a0" opacity="0.85"/><rect x="258.9" y="-0.4" width="8.0" height="3.4" fill="#2e2a2a" opacity="0.85"/><rect x="149.5" y="9.0" width="4.0" height="7.2" fill="#3a3434" opacity="0.85"/><rect x="246.6" y="3.3" width="5.4" height="6.2" fill="#6a5e58" opacity="0.85"/><rect x="220.9" y="13.9" width="2.2" height="5.9" fill="#4a4040" opacity="0.85"/><rect x="135.9" y="35.6" width="5.4" height="4.2" fill="#6a5e58" opacity="0.85"/><rect x="158.0" y="30.5" width="2.8" height="6.5" fill="#7a6a60" opacity="0.85"/><rect x="271.0" y="14.8" width="4.0" height="2.5" fill="#976a60" opacity="0.85"/><rect x="127.4" y="8.1" width="4.9" height="4.6" fill="#b07a74" opacity="0.85"/><rect x="195.3" y="14.4" width="2.2" height="3.4" fill="#4a4040" opacity="0.85"/><rect x="197.1" y="18.3" width="8.0" height="6.9" fill="#3a3434" opacity="0.85"/><rect x="272.1" y="9.1" width="3.3" height="4.2" fill="#a87a70" opacity="0.85"/><rect x="172.3" y="3.6" width="4.1" height="2.8" fill="#9a8a80" opacity="0.85"/><rect x="335.5" y="28.9" width="6.2" height="6.9" fill="#b07a70" opacity="0.85"/><rect x="314.2" y="3.9" width="8.6" height="7.0" fill="#976a60" opacity="0.85"/><rect x="286.6" y="13.5" width="3.7" height="5.9" fill="#c8b8b0" opacity="0.85"/><rect x="311.7" y="24.8" width="4.9" height="6.8" fill="#7a5a53" opacity="0.85"/><rect x="185.3" y="35.0" width="7.3" height="4.3" fill="#c0a8a0" opacity="0.85"/><rect x="289.7" y="3.5" width="4.8" height="2.5" fill="#2e2a2a" opacity="0.85"/><rect x="314.5" y="28.9" width="4.2" height="3.2" fill="#976a60" opacity="0.85"/><rect x="262.9" y="6.0" width="7.8" height="5.1" fill="#2e2a2a" opacity="0.85"/><rect x="311.3" y="8.1" width="4.0" height="7.4" fill="#c09088" opacity="0.85"/><rect x="336.2" y="1.7" width="6.6" height="7.7" fill="#3a3434" opacity="0.85"/><rect x="312.8" y="14.3" width="8.8" height="7.7" fill="#d8c8c8" opacity="0.85"/><rect x="239.4" y="36.4" width="4.5" height="4.1" fill="#c0a8a0" opacity="0.85"/><rect x="147.3" y="35.3" width="3.4" height="7.9" fill="#b07a74" opacity="0.85"/><rect x="203.4" y="19.0" width="3.3" height="7.1" fill="#9a8a80" opacity="0.85"/><rect x="136.5" y="31.4" width="2.1" height="5.4" fill="#9a8a80" opacity="0.85"/><rect x="311.4" y="20.5" width="5.5" height="2.7" fill="#976a60" opacity="0.85"/><rect x="187.8" y="31.2" width="4.8" height="7.4" fill="#7a6a60" opacity="0.85"/><rect x="308.0" y="16.5" width="3.6" height="6.1" fill="#b07a70" opacity="0.85"/><rect x="289.2" y="1.8" width="6.4" height="7.2" fill="#d8c8c8" opacity="0.85"/><rect x="237.9" y="8.7" width="7.1" height="3.5" fill="#b07a74" opacity="0.85"/><rect x="257.2" y="10.5" width="5.3" height="8.0" fill="#d8c8c8" opacity="0.85"/><rect x="118.4" y="5.2" width="3.8" height="6.8" fill="#5a4a48" opacity="0.85"/><rect x="196.8" y="19.4" width="2.7" height="4.4" fill="#c0a8a0" opacity="0.85"/><rect x="219.1" y="34.7" width="8.6" height="3.2" fill="#7a6a60" opacity="0.85"/><rect x="291.2" y="1.6" width="2.7" height="2.4" fill="#7a5a53" opacity="0.85"/><rect x="267.5" y="32.6" width="3.5" height="3.1" fill="#2e2a2a" opacity="0.85"/><rect x="134.1" y="17.4" width="7.3" height="2.9" fill="#5a4a48" opacity="0.85"/><rect x="261.0" y="8.7" width="9.1" height="2.4" fill="#c8b8b0" opacity="0.85"/><rect x="256.1" y="31.5" width="4.8" height="2.4" fill="#4e3a38" opacity="0.85"/><rect x="153.4" y="23.1" width="5.6" height="6.6" fill="#5a4a48" opacity="0.85"/><rect x="312.9" y="33.0" width="8.7" height="5.3" fill="#2e2a2a" opacity="0.85"/><rect x="272.9" y="20.4" width="5.4" height="2.1" fill="#c09088" opacity="0.85"/><rect x="215.2" y="18.1" width="3.9" height="4.4" fill="#4a4040" opacity="0.85"/><rect x="256.9" y="22.4" width="3.3" height="6.0" fill="#8a8078" opacity="0.85"/><rect x="177.4" y="2.3" width="8.4" height="7.3" fill="#7a6a60" opacity="0.85"/><rect x="123.9" y="13.2" width="8.7" height="5.3" fill="#a08078" opacity="0.85"/><rect x="137.7" y="36.0" width="2.2" height="7.8" fill="#5a4a48" opacity="0.85"/><rect x="189.8" y="22.5" width="9.3" height="4.0" fill="#9a8a80" opacity="0.85"/><rect x="182.8" y="32.0" width="2.9" height="7.3" fill="#4a4040" opacity="0.85"/><rect x="245.1" y="-2.1" width="4.9" height="2.2" fill="#a08078" opacity="0.85"/><rect x="175.5" y="-1.9" width="4.3" height="6.3" fill="#9a8a80" opacity="0.85"/><rect x="258.2" y="32.9" width="8.6" height="6.3" fill="#976a60" opacity="0.85"/><rect x="129.1" y="11.4" width="8.8" height="4.1" fill="#b07a74" opacity="0.85"/><rect x="282.3" y="10.5" width="6.6" height="5.3" fill="#3a3434" opacity="0.85"/><rect x="202.2" y="13.4" width="2.7" height="5.5" fill="#9a8a80" opacity="0.85"/><rect x="267.1" y="37.5" width="5.1" height="7.8" fill="#d8c8c8" opacity="0.85"/><rect x="312.0" y="27.6" width="6.4" height="3.9" fill="#c8b8b0" opacity="0.85"/><rect x="161.3" y="18.8" width="6.6" height="4.8" fill="#b07a74" opacity="0.85"/><rect x="258.8" y="9.2" width="7.6" height="7.7" fill="#4e3a38" opacity="0.85"/><rect x="274.1" y="23.4" width="9.5" height="2.0" fill="#4e3a38" opacity="0.85"/><rect x="230.4" y="16.0" width="7.9" height="4.5" fill="#7a6a60" opacity="0.85"/><rect x="282.9" y="18.6" width="4.4" height="4.4" fill="#976a60" opacity="0.85"/><rect x="293.4" y="9.7" width="7.7" height="5.6" fill="#2e2a2a" opacity="0.85"/><rect x="313.3" y="0.4" width="9.7" height="5.7" fill="#7a5a53" opacity="0.85"/><rect x="275.0" y="9.5" width="10.0" height="4.7" fill="#d8c8c8" opacity="0.85"/><rect x="275.9" y="33.4" width="3.3" height="2.6" fill="#976a60" opacity="0.85"/><rect x="276.9" y="5.9" width="5.5" height="2.1" fill="#d8c8c8" opacity="0.85"/><rect x="336.4" y="25.5" width="4.3" height="2.8" fill="#c8b8b0" opacity="0.85"/><rect x="278.5" y="-1.2" width="5.3" height="4.3" fill="#976a60" opacity="0.85"/><rect x="309.3" y="15.1" width="2.1" height="6.5" fill="#976a60" opacity="0.85"/><rect x="331.3" y="14.3" width="2.8" height="3.1" fill="#3a3434" opacity="0.85"/><rect x="157.2" y="12.7" width="7.4" height="4.1" fill="#b07a74" opacity="0.85"/><rect x="320.1" y="35.6" width="7.9" height="4.1" fill="#a87a70" opacity="0.85"/><rect x="186.7" y="23.9" width="7.2" height="5.5" fill="#9a8a80" opacity="0.85"/><rect x="191.1" y="-2.9" width="5.0" height="6.3" fill="#6a5e58" opacity="0.85"/><rect x="313.4" y="36.6" width="2.1" height="3.5" fill="#2e2a2a" opacity="0.85"/><rect x="247.0" y="-0.1" width="7.0" height="2.0" fill="#6a5e58" opacity="0.85"/><rect x="185.1" y="35.8" width="9.2" height="2.8" fill="#7a6a60" opacity="0.85"/><rect x="173.0" y="15.3" width="6.0" height="2.4" fill="#8a7a70" opacity="0.85"/><rect x="172.9" y="-2.2" width="7.5" height="3.9" fill="#c0a8a0" opacity="0.85"/><rect x="128.3" y="6.5" width="2.6" height="2.7" fill="#b07a74" opacity="0.85"/><rect x="309.4" y="7.2" width="3.4" height="7.0" fill="#2e2a2a" opacity="0.85"/><rect x="156.0" y="36.9" width="4.9" height="5.3" fill="#8a7a70" opacity="0.85"/><rect x="319.4" y="4.5" width="2.7" height="7.0" fill="#2e2a2a" opacity="0.85"/><rect x="168.2" y="33.7" width="3.0" height="5.3" fill="#4a4040" opacity="0.85"/><rect x="221.0" y="9.2" width="2.8" height="2.4" fill="#8a7a70" opacity="0.85"/><rect x="300.3" y="34.7" width="6.5" height="3.5" fill="#3a3434" opacity="0.85"/><rect x="162.8" y="4.2" width="7.0" height="7.0" fill="#4a4040" opacity="0.85"/><rect x="234.6" y="26.5" width="8.9" height="3.2" fill="#b07a74" opacity="0.85"/><rect x="337.4" y="30.3" width="8.0" height="2.5" fill="#4e3a38" opacity="0.85"/><rect x="206.8" y="-2.6" width="8.3" height="7.6" fill="#6a5e58" opacity="0.85"/><rect x="200.7" y="38.8" width="5.0" height="5.2" fill="#3a3434" opacity="0.85"/><rect x="290.9" y="15.5" width="10.0" height="7.1" fill="#2e2a2a" opacity="0.85"/><rect x="274.9" y="5.2" width="7.5" height="5.5" fill="#b07a70" opacity="0.85"/><rect x="168.2" y="15.8" width="7.7" height="6.2" fill="#3a3434" opacity="0.85"/><rect x="298.0" y="17.0" width="2.9" height="5.0" fill="#4e3a38" opacity="0.85"/><rect x="193.3" y="3.3" width="4.7" height="7.0" fill="#b89088" opacity="0.85"/><rect x="118.6" y="6.9" width="5.0" height="3.6" fill="#4a4040" opacity="0.85"/><rect x="216.5" y="2.4" width="3.2" height="5.1" fill="#3a3434" opacity="0.85"/><rect x="250.2" y="18.7" width="7.6" height="7.3" fill="#976a60" opacity="0.85"/><rect x="317.4" y="0.4" width="5.3" height="7.1" fill="#d8c8c8" opacity="0.85"/><rect x="145.6" y="20.9" width="8.2" height="7.1" fill="#c0a8a0" opacity="0.85"/><rect x="121.8" y="15.4" width="8.9" height="3.7" fill="#b89088" opacity="0.85"/><rect x="206.7" y="28.1" width="9.2" height="2.7" fill="#7a6a60" opacity="0.85"/><rect x="137.6" y="19.1" width="3.2" height="5.6" fill="#c0a8a0" opacity="0.85"/><rect x="218.6" y="8.5" width="7.0" height="6.2" fill="#6a5e58" opacity="0.85"/><rect x="205.4" y="-2.6" width="8.7" height="5.3" fill="#b89088" opacity="0.85"/><rect x="264.1" y="7.7" width="9.2" height="4.1" fill="#c8b8b0" opacity="0.85"/><rect x="282.1" y="4.3" width="8.3" height="5.6" fill="#c09088" opacity="0.85"/><rect x="210.5" y="15.6" width="9.7" height="7.8" fill="#9a8a80" opacity="0.85"/><rect x="171.3" y="10.7" width="6.0" height="3.5" fill="#3a3434" opacity="0.85"/><rect x="123.8" y="21.6" width="6.5" height="6.9" fill="#4a4040" opacity="0.85"/><rect x="216.9" y="16.8" width="6.9" height="6.1" fill="#6a5e58" opacity="0.85"/><rect x="283.5" y="17.9" width="7.5" height="3.0" fill="#2e2a2a" opacity="0.85"/><rect x="286.0" y="11.7" width="2.2" height="4.6" fill="#b07a70" opacity="0.85"/><rect x="187.5" y="21.9" width="2.2" height="5.3" fill="#a08078" opacity="0.85"/><rect x="287.1" y="19.2" width="4.3" height="7.0" fill="#b07a70" opacity="0.85"/><rect x="226.5" y="18.6" width="4.4" height="4.1" fill="#b89088" opacity="0.85"/><rect x="319.7" y="36.5" width="7.2" height="2.9" fill="#c8b8b0" opacity="0.85"/><rect x="223.7" y="20.4" width="2.5" height="2.1" fill="#c0a8a0" opacity="0.85"/><rect x="226.7" y="14.9" width="7.3" height="7.0" fill="#7a6a60" opacity="0.85"/><rect x="273.1" y="12.8" width="4.9" height="6.3" fill="#d8c8c8" opacity="0.85"/><rect x="129.6" y="18.6" width="6.0" height="3.1" fill="#5a4a48" opacity="0.85"/><rect x="151.7" y="10.2" width="2.5" height="8.0" fill="#c0a8a0" opacity="0.85"/><rect x="233.7" y="13.7" width="4.8" height="3.9" fill="#5a4a48" opacity="0.85"/><rect x="119.5" y="-2.2" width="5.6" height="3.9" fill="#b07a74" opacity="0.85"/><rect x="186.3" y="38.1" width="9.5" height="2.8" fill="#8a7a70" opacity="0.85"/><rect x="194.6" y="1.7" width="9.0" height="7.4" fill="#b07a74" opacity="0.85"/><rect x="247.6" y="5.0" width="3.5" height="4.8" fill="#9a8a80" opacity="0.85"/><rect x="185.5" y="5.7" width="6.4" height="5.5" fill="#3a3434" opacity="0.85"/><rect x="259.3" y="29.9" width="4.8" height="5.5" fill="#3a3434" opacity="0.85"/><rect x="245" y="0" width="5" height="38" fill="#3a3a42"/></g><path d="M208 38 L202.5 6 L250 2" stroke="#d8c23a" stroke-width="1.6" fill="none"/><path d="M338 0 V24" stroke="#e6d23a" stroke-width="2"/><path d="M196 28 a3.2 3.2 0 1 1 6.4 0 q0 3 -3.2 6 q-3.2 -3 -3.2 -6z" fill="#d0a82a"/><circle cx="290" cy="35.5" r="3.2" fill="#1f7a6a"/><circle cx="290" cy="35.5" r="1.2" fill="#e0e0e0"/></svg><div class="t" style="left:9.70px;top:91px;font-size:13.4px;color:#f4f4f4;font-weight:normal;text-shadow:0 0 2px rgba(0,0,0,.5)">Kleos 2022</div><div class="t" style="left:87.80px;top:91px;font-size:13.4px;color:#f4f4f4;font-weight:normal;text-shadow:0 0 2px rgba(0,0,0,.5)">//</div><div class="t" style="left:104.00px;top:91px;font-size:13.4px;color:#f4f4f4;font-weight:normal;text-shadow:0 0 2px rgba(0,0,0,.5)">Virgen Carmen Dol... / Maribel 2</div><div class="r" style="left:0.00px;top:144.00px;width:340.00px;height:130.50px;background:#5a97da;"></div><div class="r" style="left:0.00px;top:116.30px;width:340.00px;height:28.40px;background:#4a6d94;"></div><div class="t" style="left:4.70px;top:125px;font-size:13.8px;color:#f4f4f4;font-weight:normal;letter-spacing:-0.09px">entrevistas 5<span class="o">o</span></div><svg class="r" style="left:317.20px;top:121.90px;" width="18" height="18" viewBox="0 0 18 18"><circle cx="9" cy="9" r="7.4" fill="none" stroke="rgba(240,244,250,0.85)" stroke-width="1.5"/><path d="M7.7 5.6 L12.4 9 L7.7 12.4Z" fill="rgba(240,244,250,0.85)"/></svg><div class="r" style="left:0.00px;top:116.00px;width:340.00px;height:1.00px;background:#303030;"></div><svg class="r" style="left:4.00px;top:149.00px;" width="57" height="56" viewBox="0 0 57 56"><defs><filter id="u1" x="-20%" y="-20%" width="140%" height="140%"><feGaussianBlur stdDeviation="1.0"/></filter><clipPath id="cu1"><rect width="57" height="56"/></clipPath></defs><g clip-path="url(#cu1)"><rect width="57" height="56" fill="#5a6040"/><g filter="url(#u1)"><path d="M22 -3 H60 V36 Z" fill="#d4ecf4"/><path d="M14 -3 L60 40 V60 H28 L16 24Z" fill="#3e5a2c"/><path d="M-3 -3 H20 L30 16 L22 40 L-3 36Z" fill="#6e8248"/><circle cx="15.4" cy="24.6" r="2.6" fill="#8cb058"/><circle cx="27.3" cy="20.9" r="1.7" fill="#5a7a34"/><circle cx="10.3" cy="4.0" r="3.0" fill="#8cb058"/><circle cx="13.5" cy="19.9" r="3.1" fill="#5a7a34"/><circle cx="1.2" cy="38.7" r="3.4" fill="#8cb058"/><circle cx="11.1" cy="26.0" r="2.8" fill="#6a5a40"/><circle cx="21.8" cy="22.0" r="2.6" fill="#a8c070"/><circle cx="9.5" cy="43.9" r="3.3" fill="#a8c070"/><circle cx="10.7" cy="10.1" r="1.6" fill="#7a6048"/><circle cx="3.7" cy="12.8" r="3.9" fill="#a8c070"/><circle cx="7.1" cy="40.1" r="2.4" fill="#8cb058"/><circle cx="24.1" cy="18.5" r="3.4" fill="#6a5a40"/><circle cx="9.2" cy="3.8" r="1.5" fill="#96b464"/><circle cx="13.9" cy="40.6" r="2.1" fill="#5a7a34"/><circle cx="3.4" cy="2.6" r="1.9" fill="#8cb058"/><circle cx="19.0" cy="19.7" r="4.0" fill="#6a5a40"/><circle cx="26.2" cy="18.4" r="1.8" fill="#5e6e3a"/><circle cx="14.3" cy="9.4" r="3.7" fill="#7a6048"/><circle cx="33.1" cy="26.1" r="2.0" fill="#8cb058"/><circle cx="13.4" cy="37.6" r="1.6" fill="#a8c070"/><circle cx="5.0" cy="19.4" r="3.4" fill="#8cb058"/><circle cx="11.2" cy="13.0" r="1.7" fill="#a8c070"/><circle cx="7.1" cy="28.0" r="3.0" fill="#8cb058"/><circle cx="12.6" cy="19.9" r="3.6" fill="#8cb058"/><circle cx="4.6" cy="17.0" r="2.3" fill="#5a7a34"/><circle cx="7.8" cy="26.9" r="1.9" fill="#6a5a40"/><circle cx="21.4" cy="24.4" r="3.7" fill="#5e6e3a"/><circle cx="20.5" cy="18.5" r="1.8" fill="#a8c070"/><circle cx="17.4" cy="11.2" r="2.1" fill="#5e6e3a"/><circle cx="28.0" cy="26.2" r="2.8" fill="#7a6048"/><circle cx="31.6" cy="43.0" r="2.1" fill="#5a7a34"/><circle cx="19.0" cy="37.5" r="2.2" fill="#a8c070"/><circle cx="0.6" cy="11.8" r="2.1" fill="#8cb058"/><circle cx="1.6" cy="12.4" r="2.9" fill="#c87868"/><circle cx="4.5" cy="15.9" r="4.0" fill="#8cb058"/><circle cx="41.6" cy="16.5" r="3.8" fill="#4a6a30"/><circle cx="37.6" cy="26.4" r="3.9" fill="#6a8a44"/><circle cx="47.3" cy="42.4" r="2.4" fill="#6a8a44"/><circle cx="52.2" cy="29.2" r="3.7" fill="#4a6a30"/><circle cx="42.5" cy="13.7" r="4.0" fill="#4a6a30"/><circle cx="52.6" cy="43.5" r="3.8" fill="#3a5028"/><circle cx="45.7" cy="31.1" r="3.6" fill="#3a5028"/><circle cx="37.8" cy="20.6" r="2.7" fill="#4a6a30"/><circle cx="29.5" cy="10.5" r="1.9" fill="#6a8a44"/><circle cx="42.6" cy="33.8" r="3.1" fill="#6a8a44"/><circle cx="52.6" cy="27.7" r="2.0" fill="#6a8a44"/><circle cx="53.1" cy="11.9" r="3.9" fill="#4a6a30"/><circle cx="30.2" cy="17.8" r="2.7" fill="#3a5028"/><circle cx="6" cy="3" r="3" fill="#d06a5a"/><circle cx="11" cy="38" r="2.5" fill="#e07058"/><path d="M-3 30 L10 33 L12 44 L-3 46Z" fill="#2e2a22"/><path d="M-3 42 L24 56 V60 H-3Z" fill="#6a3c28"/><path d="M12 42 L28 39 L29 60 H16 Z" fill="#b49a68"/></g></g><circle cx="28.4" cy="28" r="14.6" fill="none" stroke="#5a97da" stroke-width="3.2"/><path d="M24.8 21 L34.6 28 L24.8 35Z" fill="#5a97da"/></svg><div class="t" style="left:67.30px;top:149px;font-size:11.85px;color:#f4f4f4;font-weight:normal;letter-spacing:-0.013px">Virgen Carmen Dolorosa - Maribel 2.mp3</div><div class="t" style="right:681.00px;top:149px;font-size:11.85px;color:#f4f4f4;font-weight:normal;">4.66s</div><svg class="r" style="left:67.00px;top:159.20px;" width="266" height="32" viewBox="0 0 266 32"><path d="M0 16 L0.0 15.59 L2.0 15.11 L4.0 14.58 L6.0 13.79 L8.0 13.16 L10.0 13.34 L12.0 13.39 L14.0 13.44 L16.0 13.51 L18.0 13.56 L20.0 13.43 L22.0 13.48 L24.0 13.36 L26.0 13.32 L28.0 13.69 L30.0 14.03 L32.0 14.03 L34.0 13.92 L36.0 13.77 L38.0 13.71 L40.0 13.62 L42.0 13.56 L44.0 13.38 L46.0 13.37 L48.0 13.36 L50.0 13.41 L52.0 13.72 L54.0 13.88 L56.0 13.76 L58.0 13.56 L60.0 13.44 L62.0 13.25 L64.0 13.20 L66.0 13.11 L68.0 12.98 L70.0 13.06 L72.0 13.14 L74.0 13.18 L76.0 13.66 L78.0 13.88 L80.0 13.88 L82.0 14.00 L84.0 14.03 L86.0 14.09 L88.0 14.01 L90.0 13.81 L92.0 13.91 L94.0 13.50 L96.0 13.41 L98.0 13.33 L100.0 13.24 L102.0 13.08 L104.0 13.11 L106.0 13.18 L108.0 13.41 L110.0 13.71 L112.0 13.56 L114.0 13.67 L116.0 13.84 L118.0 13.81 L120.0 13.84 L122.0 13.84 L124.0 13.78 L126.0 13.65 L128.0 13.59 L130.0 13.66 L132.0 13.84 L134.0 14.10 L136.0 14.10 L138.0 14.09 L140.0 13.90 L142.0 13.75 L144.0 13.74 L146.0 13.71 L148.0 13.63 L150.0 13.72 L152.0 13.51 L154.0 13.55 L156.0 13.71 L158.0 13.71 L160.0 13.70 L162.0 13.52 L164.0 13.76 L166.0 13.89 L168.0 13.78 L170.0 13.86 L172.0 13.95 L174.0 13.92 L176.0 13.81 L178.0 13.92 L180.0 13.89 L182.0 13.77 L184.0 13.84 L186.0 13.85 L188.0 13.72 L190.0 13.77 L192.0 13.62 L194.0 13.64 L196.0 13.77 L198.0 13.85 L200.0 13.64 L202.0 13.80 L204.0 13.98 L206.0 13.95 L208.0 13.93 L210.0 14.04 L212.0 13.77 L214.0 13.45 L216.0 13.15 L218.0 13.36 L220.0 13.29 L222.0 13.40 L224.0 13.48 L226.0 13.56 L228.0 13.31 L230.0 13.33 L232.0 13.40 L234.0 13.56 L236.0 13.59 L238.0 13.82 L240.0 13.84 L242.0 13.79 L244.0 13.42 L246.0 13.32 L248.0 13.12 L250.0 12.94 L252.0 13.01 L254.0 13.23 L256.0 13.08 L258.0 13.36 L260.0 13.43 L262.0 13.74 L264.0 13.95 L266.0 13.97 L266.0 18.03 L264.0 18.05 L262.0 18.26 L260.0 18.57 L258.0 18.64 L256.0 18.92 L254.0 18.77 L252.0 18.99 L250.0 19.06 L248.0 18.88 L246.0 18.68 L244.0 18.58 L242.0 18.21 L240.0 18.16 L238.0 18.18 L236.0 18.41 L234.0 18.44 L232.0 18.60 L230.0 18.67 L228.0 18.69 L226.0 18.44 L224.0 18.52 L222.0 18.60 L220.0 18.71 L218.0 18.64 L216.0 18.85 L214.0 18.55 L212.0 18.23 L210.0 17.96 L208.0 18.07 L206.0 18.05 L204.0 18.02 L202.0 18.20 L200.0 18.36 L198.0 18.15 L196.0 18.23 L194.0 18.36 L192.0 18.38 L190.0 18.23 L188.0 18.28 L186.0 18.15 L184.0 18.16 L182.0 18.23 L180.0 18.11 L178.0 18.08 L176.0 18.19 L174.0 18.08 L172.0 18.05 L170.0 18.14 L168.0 18.22 L166.0 18.11 L164.0 18.24 L162.0 18.48 L160.0 18.30 L158.0 18.29 L156.0 18.29 L154.0 18.45 L152.0 18.49 L150.0 18.28 L148.0 18.37 L146.0 18.29 L144.0 18.26 L142.0 18.25 L140.0 18.10 L138.0 17.91 L136.0 17.90 L134.0 17.90 L132.0 18.16 L130.0 18.34 L128.0 18.41 L126.0 18.35 L124.0 18.22 L122.0 18.16 L120.0 18.16 L118.0 18.19 L116.0 18.16 L114.0 18.33 L112.0 18.44 L110.0 18.29 L108.0 18.59 L106.0 18.82 L104.0 18.89 L102.0 18.92 L100.0 18.76 L98.0 18.67 L96.0 18.59 L94.0 18.50 L92.0 18.09 L90.0 18.19 L88.0 17.99 L86.0 17.91 L84.0 17.97 L82.0 18.00 L80.0 18.12 L78.0 18.12 L76.0 18.34 L74.0 18.82 L72.0 18.86 L70.0 18.94 L68.0 19.02 L66.0 18.89 L64.0 18.80 L62.0 18.75 L60.0 18.56 L58.0 18.44 L56.0 18.24 L54.0 18.12 L52.0 18.28 L50.0 18.59 L48.0 18.64 L46.0 18.63 L44.0 18.62 L42.0 18.44 L40.0 18.38 L38.0 18.29 L36.0 18.23 L34.0 18.08 L32.0 17.97 L30.0 17.97 L28.0 18.31 L26.0 18.68 L24.0 18.64 L22.0 18.52 L20.0 18.57 L18.0 18.44 L16.0 18.49 L14.0 18.56 L12.0 18.61 L10.0 18.66 L8.0 18.84 L6.0 18.21 L4.0 17.42 L2.0 16.89 L0.0 16.41 Z" fill="#efefef"/></svg><svg class="r" style="left:4.00px;top:213.70px;" width="57" height="56" viewBox="0 0 57 56"><defs><filter id="u2" x="-20%" y="-20%" width="140%" height="140%"><feGaussianBlur stdDeviation="1.0"/></filter><clipPath id="cu2"><rect width="57" height="56"/></clipPath></defs><g clip-path="url(#cu2)"><rect width="57" height="56" fill="#5a6040"/><g filter="url(#u2)"><path d="M22 -3 H60 V36 Z" fill="#d4ecf4"/><path d="M14 -3 L60 40 V60 H28 L16 24Z" fill="#3e5a2c"/><path d="M-3 -3 H20 L30 16 L22 40 L-3 36Z" fill="#6e8248"/><circle cx="15.4" cy="24.6" r="2.6" fill="#8cb058"/><circle cx="27.3" cy="20.9" r="1.7" fill="#5a7a34"/><circle cx="10.3" cy="4.0" r="3.0" fill="#8cb058"/><circle cx="13.5" cy="19.9" r="3.1" fill="#5a7a34"/><circle cx="1.2" cy="38.7" r="3.4" fill="#8cb058"/><circle cx="11.1" cy="26.0" r="2.8" fill="#6a5a40"/><circle cx="21.8" cy="22.0" r="2.6" fill="#a8c070"/><circle cx="9.5" cy="43.9" r="3.3" fill="#a8c070"/><circle cx="10.7" cy="10.1" r="1.6" fill="#7a6048"/><circle cx="3.7" cy="12.8" r="3.9" fill="#a8c070"/><circle cx="7.1" cy="40.1" r="2.4" fill="#8cb058"/><circle cx="24.1" cy="18.5" r="3.4" fill="#6a5a40"/><circle cx="9.2" cy="3.8" r="1.5" fill="#96b464"/><circle cx="13.9" cy="40.6" r="2.1" fill="#5a7a34"/><circle cx="3.4" cy="2.6" r="1.9" fill="#8cb058"/><circle cx="19.0" cy="19.7" r="4.0" fill="#6a5a40"/><circle cx="26.2" cy="18.4" r="1.8" fill="#5e6e3a"/><circle cx="14.3" cy="9.4" r="3.7" fill="#7a6048"/><circle cx="33.1" cy="26.1" r="2.0" fill="#8cb058"/><circle cx="13.4" cy="37.6" r="1.6" fill="#a8c070"/><circle cx="5.0" cy="19.4" r="3.4" fill="#8cb058"/><circle cx="11.2" cy="13.0" r="1.7" fill="#a8c070"/><circle cx="7.1" cy="28.0" r="3.0" fill="#8cb058"/><circle cx="12.6" cy="19.9" r="3.6" fill="#8cb058"/><circle cx="4.6" cy="17.0" r="2.3" fill="#5a7a34"/><circle cx="7.8" cy="26.9" r="1.9" fill="#6a5a40"/><circle cx="21.4" cy="24.4" r="3.7" fill="#5e6e3a"/><circle cx="20.5" cy="18.5" r="1.8" fill="#a8c070"/><circle cx="17.4" cy="11.2" r="2.1" fill="#5e6e3a"/><circle cx="28.0" cy="26.2" r="2.8" fill="#7a6048"/><circle cx="31.6" cy="43.0" r="2.1" fill="#5a7a34"/><circle cx="19.0" cy="37.5" r="2.2" fill="#a8c070"/><circle cx="0.6" cy="11.8" r="2.1" fill="#8cb058"/><circle cx="1.6" cy="12.4" r="2.9" fill="#c87868"/><circle cx="4.5" cy="15.9" r="4.0" fill="#8cb058"/><circle cx="41.6" cy="16.5" r="3.8" fill="#4a6a30"/><circle cx="37.6" cy="26.4" r="3.9" fill="#6a8a44"/><circle cx="47.3" cy="42.4" r="2.4" fill="#6a8a44"/><circle cx="52.2" cy="29.2" r="3.7" fill="#4a6a30"/><circle cx="42.5" cy="13.7" r="4.0" fill="#4a6a30"/><circle cx="52.6" cy="43.5" r="3.8" fill="#3a5028"/><circle cx="45.7" cy="31.1" r="3.6" fill="#3a5028"/><circle cx="37.8" cy="20.6" r="2.7" fill="#4a6a30"/><circle cx="29.5" cy="10.5" r="1.9" fill="#6a8a44"/><circle cx="42.6" cy="33.8" r="3.1" fill="#6a8a44"/><circle cx="52.6" cy="27.7" r="2.0" fill="#6a8a44"/><circle cx="53.1" cy="11.9" r="3.9" fill="#4a6a30"/><circle cx="30.2" cy="17.8" r="2.7" fill="#3a5028"/><circle cx="6" cy="3" r="3" fill="#d06a5a"/><circle cx="11" cy="38" r="2.5" fill="#e07058"/><path d="M-3 30 L10 33 L12 44 L-3 46Z" fill="#2e2a22"/><path d="M-3 42 L24 56 V60 H-3Z" fill="#6a3c28"/><path d="M12 42 L28 39 L29 60 H16 Z" fill="#b49a68"/></g></g><circle cx="28.4" cy="28" r="14.6" fill="none" stroke="#5a97da" stroke-width="3.2"/><path d="M24.8 21 L34.6 28 L24.8 35Z" fill="#5a97da"/></svg><div class="t" style="left:67.30px;top:213px;font-size:11.85px;color:#f4f4f4;font-weight:normal;letter-spacing:-0.013px">Virgen Carmen Dolorosa - Maribel 2.mp3</div><div class="t" style="right:681.00px;top:213px;font-size:11.85px;color:#f4f4f4;font-weight:normal;">12.24s</div><svg class="r" style="left:67.00px;top:223.90px;" width="266" height="32" viewBox="0 0 266 32"><path d="M0 16 L0.0 15.47 L2.0 14.84 L4.0 14.27 L6.0 13.78 L8.0 13.21 L10.0 13.29 L12.0 13.26 L14.0 13.58 L16.0 13.51 L18.0 13.66 L20.0 13.35 L22.0 13.25 L24.0 13.38 L26.0 13.35 L28.0 13.22 L30.0 13.31 L32.0 13.41 L34.0 13.47 L36.0 13.31 L38.0 13.05 L40.0 13.21 L42.0 12.87 L44.0 13.03 L46.0 12.68 L48.0 12.88 L50.0 12.63 L52.0 12.75 L54.0 12.84 L56.0 12.84 L58.0 12.85 L60.0 13.02 L62.0 13.27 L64.0 13.37 L66.0 13.27 L68.0 13.13 L70.0 13.29 L72.0 13.52 L74.0 13.25 L76.0 13.35 L78.0 13.34 L80.0 13.66 L82.0 13.47 L84.0 13.82 L86.0 13.67 L88.0 13.85 L90.0 13.87 L92.0 13.62 L94.0 13.93 L96.0 13.76 L98.0 13.56 L100.0 13.66 L102.0 13.52 L104.0 13.18 L106.0 13.39 L108.0 13.32 L110.0 13.65 L112.0 13.54 L114.0 13.60 L116.0 13.38 L118.0 13.60 L120.0 13.24 L122.0 13.53 L124.0 13.07 L126.0 13.18 L128.0 13.01 L130.0 12.84 L132.0 13.23 L134.0 13.34 L136.0 13.20 L138.0 13.31 L140.0 13.44 L142.0 13.05 L144.0 13.38 L146.0 13.48 L148.0 13.46 L150.0 13.47 L152.0 13.47 L154.0 13.75 L156.0 13.74 L158.0 13.93 L160.0 13.80 L162.0 13.62 L164.0 13.53 L166.0 13.36 L168.0 13.37 L170.0 13.36 L172.0 13.49 L174.0 13.64 L176.0 13.77 L178.0 13.54 L180.0 13.55 L182.0 13.51 L184.0 13.31 L186.0 13.06 L188.0 13.19 L190.0 12.84 L192.0 12.84 L194.0 12.85 L196.0 13.11 L198.0 12.89 L200.0 13.22 L202.0 13.16 L204.0 13.40 L206.0 13.73 L208.0 13.59 L210.0 13.65 L212.0 13.44 L214.0 13.20 L216.0 13.04 L218.0 13.08 L220.0 12.90 L222.0 12.98 L224.0 12.81 L226.0 12.84 L228.0 12.84 L230.0 13.16 L232.0 13.09 L234.0 13.14 L236.0 12.94 L238.0 12.87 L240.0 12.77 L242.0 12.83 L244.0 13.06 L246.0 13.05 L248.0 13.03 L250.0 13.23 L252.0 13.21 L254.0 13.05 L256.0 13.17 L258.0 12.99 L260.0 13.33 L262.0 13.54 L264.0 13.57 L266.0 13.46 L266.0 18.54 L264.0 18.43 L262.0 18.46 L260.0 18.67 L258.0 19.01 L256.0 18.83 L254.0 18.95 L252.0 18.79 L250.0 18.77 L248.0 18.97 L246.0 18.95 L244.0 18.94 L242.0 19.17 L240.0 19.23 L238.0 19.13 L236.0 19.06 L234.0 18.86 L232.0 18.91 L230.0 18.84 L228.0 19.16 L226.0 19.16 L224.0 19.19 L222.0 19.02 L220.0 19.10 L218.0 18.92 L216.0 18.96 L214.0 18.80 L212.0 18.56 L210.0 18.35 L208.0 18.41 L206.0 18.27 L204.0 18.60 L202.0 18.84 L200.0 18.78 L198.0 19.11 L196.0 18.89 L194.0 19.15 L192.0 19.16 L190.0 19.16 L188.0 18.81 L186.0 18.94 L184.0 18.69 L182.0 18.49 L180.0 18.45 L178.0 18.46 L176.0 18.23 L174.0 18.36 L172.0 18.51 L170.0 18.64 L168.0 18.63 L166.0 18.64 L164.0 18.47 L162.0 18.38 L160.0 18.20 L158.0 18.07 L156.0 18.26 L154.0 18.25 L152.0 18.53 L150.0 18.53 L148.0 18.54 L146.0 18.52 L144.0 18.62 L142.0 18.95 L140.0 18.56 L138.0 18.69 L136.0 18.80 L134.0 18.66 L132.0 18.77 L130.0 19.16 L128.0 18.99 L126.0 18.82 L124.0 18.93 L122.0 18.47 L120.0 18.76 L118.0 18.40 L116.0 18.62 L114.0 18.40 L112.0 18.46 L110.0 18.35 L108.0 18.68 L106.0 18.61 L104.0 18.82 L102.0 18.48 L100.0 18.34 L98.0 18.44 L96.0 18.24 L94.0 18.07 L92.0 18.38 L90.0 18.13 L88.0 18.15 L86.0 18.33 L84.0 18.18 L82.0 18.53 L80.0 18.34 L78.0 18.66 L76.0 18.65 L74.0 18.75 L72.0 18.48 L70.0 18.71 L68.0 18.87 L66.0 18.73 L64.0 18.63 L62.0 18.73 L60.0 18.98 L58.0 19.15 L56.0 19.16 L54.0 19.16 L52.0 19.25 L50.0 19.37 L48.0 19.12 L46.0 19.32 L44.0 18.97 L42.0 19.13 L40.0 18.79 L38.0 18.95 L36.0 18.69 L34.0 18.53 L32.0 18.59 L30.0 18.69 L28.0 18.78 L26.0 18.65 L24.0 18.62 L22.0 18.75 L20.0 18.65 L18.0 18.34 L16.0 18.49 L14.0 18.42 L12.0 18.74 L10.0 18.71 L8.0 18.79 L6.0 18.22 L4.0 17.73 L2.0 17.16 L0.0 16.53 Z" fill="#efefef"/></svg><div class="r" style="left:0.00px;top:273.90px;width:340.00px;height:27.80px;background:#4f6667;"></div><div class="t" style="left:4.70px;top:282px;font-size:13.8px;color:#f4f4f4;font-weight:normal;letter-spacing:-0.09px">entrevistas\música 5</div><div class="r" style="left:0.00px;top:301.70px;width:340.00px;height:29.20px;background:#5a8f8f;"></div><div class="t" style="left:7.00px;top:311px;font-size:11.8px;color:#4a5a5a;font-weight:normal;-webkit-text-stroke:0">Pulsa sobre el nombre de la pista para añadir sonidos.</div><div class="r" style="left:0.00px;top:358.00px;width:340.00px;height:130.50px;background:#1e5e1e;"></div><div class="r" style="left:0.00px;top:330.90px;width:340.00px;height:27.30px;background:#344f33;"></div><div class="t" style="left:4.70px;top:338px;font-size:13.8px;color:#f4f4f4;font-weight:normal;letter-spacing:-0.09px">musicas 6 A base</div><svg class="r" style="left:317.20px;top:335.95px;" width="18" height="18" viewBox="0 0 18 18"><circle cx="9" cy="9" r="7.4" fill="none" stroke="rgba(240,244,250,0.85)" stroke-width="1.5"/><path d="M7.7 5.6 L12.4 9 L7.7 12.4Z" fill="rgba(240,244,250,0.85)"/></svg><svg class="r" style="left:4.00px;top:362.50px;" width="57" height="56" viewBox="0 0 57 56"><defs><filter id="u3" x="-20%" y="-20%" width="140%" height="140%"><feGaussianBlur stdDeviation="1.3"/></filter><clipPath id="cu3"><rect width="57" height="56"/></clipPath></defs><g clip-path="url(#cu3)"><rect width="57" height="56" fill="#3c3a8a"/><g filter="url(#u3)"><rect x="-3" y="-3" width="63" height="20" fill="#8a5480"/><path d="M-3 17 V6 Q7 -2 14 6 Q18 11 20 17Z" fill="#e8704e"/><rect x="38" y="-3" width="22" height="20" fill="#22204a"/><rect x="42" y="11" width="12" height="4" fill="#5a6a5a"/><rect x="-3" y="17" width="63" height="22" fill="#34327e"/><rect x="50" y="17" width="10" height="22" fill="#7a4a78"/><rect x="-3" y="39" width="63" height="20" fill="#4ea24a"/><rect x="-3" y="39" width="63" height="3" fill="#8cc080"/></g><g filter="url(#fb05)"><path d="M23.5 25 H34.5 L35 41 H32.5 L33 55 H30 L29 45 L28 55 H25 L25.5 41 H23Z" fill="#2e3490"/><rect x="26.5" y="30" width="6" height="10" fill="#a83848"/><path d="M21 19 L34 3 L40 4 L40 11 L27 22Z" fill="#d2b260"/><ellipse cx="30" cy="21" rx="12" ry="3.8" fill="#363636" transform="rotate(-18 30 21)"/></g></g><circle cx="28.7" cy="29.3" r="10.6" fill="none" stroke="rgba(230,230,240,0.32)" stroke-width="4.3"/><path d="M39.3 28.3 A10.6 10.6 0 0 1 20.7 36.3" fill="none" stroke="rgba(235,235,240,0.8)" stroke-width="4.3"/></svg><div class="t" style="left:67.30px;top:362px;font-size:11.85px;color:#f4f4f4;font-weight:normal;letter-spacing:-0.13px">1-14 Khakasian Land.mp3</div><div class="t" style="right:681.00px;top:362px;font-size:11.85px;color:#f4f4f4;font-weight:normal;">11.4s</div><svg class="r" style="left:67.00px;top:372.70px;" width="266" height="32" viewBox="0 0 266 32"><path d="M0 16 L0 15.07 L1 14.32 L2 13.20 L3 11.84 L4 10.31 L5 10.57 L6 10.78 L7 12.20 L8 12.25 L9 12.23 L10 12.56 L11 12.32 L12 12.39 L13 12.16 L14 12.56 L15 12.02 L16 12.33 L17 12.41 L18 12.41 L19 12.24 L20 12.37 L21 12.58 L22 11.46 L23 9.93 L24 8.08 L25 9.74 L26 11.78 L27 12.40 L28 12.34 L29 12.50 L30 12.21 L31 12.33 L32 12.53 L33 12.49 L34 12.10 L35 12.43 L36 12.21 L37 12.39 L38 11.62 L39 10.76 L40 9.79 L41 10.40 L42 11.43 L43 11.84 L44 12.01 L45 12.03 L46 12.47 L47 11.73 L48 9.65 L49 7.48 L50 9.56 L51 11.70 L52 12.57 L53 12.18 L54 12.06 L55 12.25 L56 12.15 L57 12.42 L58 12.29 L59 12.04 L60 12.40 L61 12.08 L62 12.13 L63 12.48 L64 12.11 L65 12.12 L66 12.12 L67 12.60 L68 12.08 L69 11.44 L70 9.61 L71 7.96 L72 8.11 L73 9.72 L74 11.44 L75 12.09 L76 12.30 L77 12.41 L78 10.90 L79 9.56 L80 8.08 L81 7.82 L82 9.43 L83 11.05 L84 12.24 L85 12.37 L86 12.23 L87 12.38 L88 12.18 L89 12.00 L90 11.17 L91 9.80 L92 8.86 L93 9.04 L94 10.45 L95 11.30 L96 12.32 L97 12.11 L98 12.07 L99 12.20 L100 12.26 L101 12.25 L102 12.51 L103 12.57 L104 12.54 L105 12.49 L106 12.10 L107 12.09 L108 12.10 L109 11.24 L110 10.25 L111 8.83 L112 10.39 L113 11.21 L114 12.41 L115 12.10 L116 12.49 L117 12.23 L118 12.36 L119 12.36 L120 12.35 L121 12.30 L122 12.35 L123 12.50 L124 12.15 L125 12.29 L126 12.21 L127 12.51 L128 11.98 L129 10.41 L130 8.57 L131 7.18 L132 8.70 L133 10.62 L134 11.90 L135 12.18 L136 12.09 L137 12.44 L138 12.59 L139 12.37 L140 12.38 L141 10.57 L142 8.33 L143 7.86 L144 9.83 L145 12.10 L146 12.17 L147 12.36 L148 12.02 L149 12.46 L150 12.17 L151 12.02 L152 12.45 L153 12.40 L154 11.13 L155 10.01 L156 9.03 L157 10.13 L158 11.33 L159 11.89 L160 12.39 L161 12.19 L162 12.40 L163 12.31 L164 12.25 L165 11.93 L166 9.87 L167 7.33 L168 9.04 L169 11.73 L170 12.38 L171 12.15 L172 12.19 L173 12.12 L174 12.15 L175 12.20 L176 12.53 L177 12.39 L178 12.19 L179 12.49 L180 12.22 L181 12.07 L182 12.53 L183 12.52 L184 12.17 L185 12.27 L186 12.31 L187 11.40 L188 10.00 L189 9.62 L190 10.81 L191 11.88 L192 12.57 L193 12.45 L194 12.39 L195 12.36 L196 12.14 L197 12.09 L198 12.44 L199 12.53 L200 12.16 L201 12.49 L202 12.15 L203 10.61 L204 9.05 L205 9.18 L206 10.88 L207 12.45 L208 12.58 L209 11.55 L210 10.23 L211 8.48 L212 6.62 L213 8.56 L214 10.07 L215 11.55 L216 12.14 L217 12.30 L218 12.32 L219 12.28 L220 12.30 L221 12.33 L222 12.02 L223 12.52 L224 12.23 L225 10.93 L226 9.23 L227 8.63 L228 10.54 L229 12.52 L230 12.24 L231 12.17 L232 12.39 L233 12.04 L234 12.34 L235 12.31 L236 12.57 L237 12.48 L238 12.30 L239 12.28 L240 11.83 L241 10.95 L242 9.99 L243 9.48 L244 10.79 L245 11.68 L246 12.47 L247 12.47 L248 12.51 L249 12.48 L250 12.50 L251 12.50 L252 12.53 L253 11.84 L254 10.61 L255 8.87 L256 7.58 L257 8.47 L258 9.64 L259 11.67 L260 12.50 L261 12.39 L262 12.57 L263 12.43 L264 12.32 L265 12.42 L266 12.44 L266 19.89 L265 19.55 L264 19.96 L263 19.87 L262 19.84 L261 19.47 L260 19.77 L259 20.41 L258 21.72 L257 23.07 L256 24.60 L255 23.32 L254 21.70 L253 20.01 L252 19.50 L251 19.42 L250 19.64 L249 19.53 L248 19.68 L247 19.87 L246 19.66 L245 21.00 L244 21.84 L243 22.50 L242 21.20 L241 20.56 L240 19.58 L239 19.65 L238 19.82 L237 19.50 L236 19.45 L235 19.47 L234 19.85 L233 19.92 L232 19.88 L231 19.84 L230 19.96 L229 19.91 L228 20.55 L227 22.12 L226 23.66 L225 21.68 L224 19.78 L223 19.88 L222 19.94 L221 19.74 L220 19.79 L219 19.42 L218 19.52 L217 19.71 L216 20.39 L215 21.58 L214 23.52 L213 25.17 L212 23.48 L211 21.86 L210 20.23 L209 19.97 L208 19.88 L207 19.89 L206 21.39 L205 23.43 L204 22.42 L203 20.69 L202 19.89 L201 19.65 L200 19.51 L199 19.87 L198 19.46 L197 19.47 L196 19.61 L195 19.72 L194 19.60 L193 19.86 L192 19.70 L191 20.90 L190 21.64 L189 22.66 L188 21.58 L187 20.07 L186 19.59 L185 19.79 L184 19.76 L183 19.60 L182 19.96 L181 19.79 L180 19.51 L179 19.79 L178 19.74 L177 19.83 L176 19.70 L175 19.72 L174 19.98 L173 19.56 L172 19.79 L171 19.58 L170 19.86 L169 19.96 L168 21.74 L167 23.50 L166 23.50 L165 21.43 L164 19.97 L163 19.53 L162 19.66 L161 19.40 L160 19.75 L159 19.95 L158 20.89 L157 22.33 L156 22.67 L155 21.57 L154 20.87 L153 19.51 L152 19.51 L151 19.91 L150 19.81 L149 19.54 L148 19.68 L147 19.84 L146 19.91 L145 21.10 L144 23.42 L143 24.26 L142 22.15 L141 19.82 L140 19.59 L139 19.50 L138 19.69 L137 19.53 L136 19.75 L135 19.65 L134 21.25 L133 23.20 L132 24.68 L131 23.26 L130 21.54 L129 19.99 L128 19.95 L127 19.46 L126 19.94 L125 19.69 L124 19.80 L123 19.81 L122 19.85 L121 19.98 L120 19.45 L119 19.61 L118 19.62 L117 19.85 L116 19.55 L115 19.55 L114 19.74 L113 20.47 L112 22.22 L111 23.36 L110 22.05 L109 20.73 L108 19.97 L107 19.80 L106 19.47 L105 19.41 L104 19.93 L103 19.46 L102 19.86 L101 19.40 L100 19.46 L99 19.84 L98 19.88 L97 19.80 L96 19.47 L95 19.93 L94 21.43 L93 22.57 L92 23.39 L91 22.33 L90 21.48 L89 20.32 L88 19.65 L87 19.70 L86 19.66 L85 19.88 L84 19.87 L83 19.93 L82 21.19 L81 23.00 L80 24.08 L79 23.28 L78 22.08 L77 20.50 L76 19.59 L75 19.83 L74 21.99 L73 23.12 L72 24.37 L71 23.17 L70 21.33 L69 19.60 L68 19.43 L67 19.78 L66 19.89 L65 19.95 L64 19.50 L63 19.72 L62 19.61 L61 19.69 L60 19.55 L59 19.77 L58 19.65 L57 19.80 L56 19.50 L55 19.41 L54 19.94 L53 19.95 L52 19.94 L51 21.25 L50 23.34 L49 23.69 L48 21.50 L47 19.80 L46 19.85 L45 19.96 L44 19.66 L43 20.30 L42 20.72 L41 22.21 L40 22.25 L39 21.26 L38 20.59 L37 19.48 L36 19.88 L35 19.88 L34 19.51 L33 19.88 L32 19.72 L31 19.54 L30 19.93 L29 19.60 L28 19.91 L27 19.90 L26 20.43 L25 22.52 L24 23.89 L23 22.40 L22 20.23 L21 19.74 L20 19.86 L19 19.58 L18 19.62 L17 19.62 L16 19.76 L15 19.55 L14 19.81 L13 19.41 L12 19.82 L11 19.81 L10 19.78 L9 19.78 L8 19.41 L7 19.99 L6 21.23 L5 21.80 L4 21.50 L3 20.22 L2 18.95 L1 17.70 L0 16.95 Z" fill="#efefef"/></svg><svg class="r" style="left:4.00px;top:427.20px;" width="57" height="56" viewBox="0 0 57 56"><defs><filter id="u4" x="-20%" y="-20%" width="140%" height="140%"><feGaussianBlur stdDeviation="1.1"/></filter><clipPath id="cu4"><rect width="57" height="56"/></clipPath></defs><g clip-path="url(#cu4)"><rect width="57" height="56" fill="#ebe3db"/><g filter="url(#u4)"><path d="M36 14 L60 10 V60 H30 L38 34Z" fill="#d6b39b"/><path d="M-3 -3 H60 V3 H-3Z" fill="#f8f6f4"/><path d="M3 26 Q2 6 10 1 L48 0 Q57 6 57 28 L50 14 Q30 10 8 14Z" fill="#5e7048"/><path d="M12 1 L13 12 M19 0 L20 11 M26 0 L26 11 M33 0 L33 11 M40 0 L39 11 M47 1 L45 12" stroke="#3a4e2c" stroke-width="2.2"/><path d="M18 2 L22 10" stroke="#b8d0d8" stroke-width="2"/><ellipse cx="11.5" cy="17" rx="3.2" ry="3.5" fill="#3a2626"/><ellipse cx="42" cy="17.5" rx="3.2" ry="3.5" fill="#3a2626"/><ellipse cx="25" cy="36" rx="10" ry="7.5" fill="#4a3030"/><ellipse cx="26" cy="48" rx="12" ry="4" fill="#5a423c"/><ellipse cx="7" cy="40" rx="5" ry="12" fill="#f8f4f0"/><ellipse cx="25" cy="24" rx="9" ry="6" fill="#f6f2ee"/></g></g><circle cx="28.4" cy="28" r="14.6" fill="none" stroke="#1e5e1e" stroke-width="3.2"/><path d="M24.8 21 L34.6 28 L24.8 35Z" fill="#1e5e1e"/></svg><div class="t" style="left:67.30px;top:427px;font-size:11.85px;color:#f4f4f4;font-weight:normal;letter-spacing:-0.122px">Ritmo palmas _ cajón.mp3</div><div class="t" style="right:681.00px;top:427px;font-size:11.85px;color:#f4f4f4;font-weight:normal;">11.89s</div><svg class="r" style="left:67.00px;top:437.40px;" width="266" height="32" viewBox="0 0 266 32"><path d="M0 16 L0.0 15.52 L2.0 14.67 L4.0 14.46 L6.0 13.78 L8.0 12.96 L10.0 13.24 L12.0 13.26 L14.0 13.48 L16.0 13.54 L18.0 13.33 L20.0 13.71 L22.0 13.47 L24.0 13.70 L26.0 13.73 L28.0 13.82 L30.0 13.50 L32.0 13.58 L34.0 13.85 L36.0 13.42 L38.0 13.60 L40.0 13.49 L42.0 13.49 L44.0 13.14 L46.0 12.87 L48.0 12.13 L50.0 12.84 L52.0 12.80 L54.0 12.95 L56.0 12.84 L58.0 12.28 L60.0 12.75 L62.0 13.01 L64.0 12.93 L66.0 12.98 L68.0 12.73 L70.0 12.64 L72.0 12.94 L74.0 13.14 L76.0 13.30 L78.0 13.32 L80.0 13.76 L82.0 13.65 L84.0 13.61 L86.0 12.44 L88.0 13.40 L90.0 13.41 L92.0 13.18 L94.0 13.01 L96.0 13.21 L98.0 12.88 L100.0 12.81 L102.0 12.88 L104.0 12.86 L106.0 12.89 L108.0 12.77 L110.0 12.63 L112.0 12.94 L114.0 12.58 L116.0 12.94 L118.0 12.90 L120.0 11.98 L122.0 12.84 L124.0 13.12 L126.0 12.51 L128.0 13.89 L130.0 13.75 L132.0 13.27 L134.0 13.15 L136.0 13.19 L138.0 13.13 L140.0 12.92 L142.0 12.38 L144.0 12.96 L146.0 12.88 L148.0 13.24 L150.0 13.05 L152.0 13.39 L154.0 13.12 L156.0 13.37 L158.0 13.41 L160.0 13.69 L162.0 13.34 L164.0 13.56 L166.0 13.13 L168.0 13.26 L170.0 12.06 L172.0 13.58 L174.0 13.49 L176.0 13.57 L178.0 13.38 L180.0 13.33 L182.0 12.90 L184.0 12.52 L186.0 12.89 L188.0 12.70 L190.0 12.66 L192.0 12.93 L194.0 12.68 L196.0 12.85 L198.0 13.03 L200.0 13.10 L202.0 13.02 L204.0 13.13 L206.0 13.25 L208.0 13.39 L210.0 13.47 L212.0 13.13 L214.0 12.97 L216.0 12.85 L218.0 12.90 L220.0 12.96 L222.0 13.11 L224.0 13.28 L226.0 12.88 L228.0 12.87 L230.0 12.27 L232.0 12.56 L234.0 12.63 L236.0 12.58 L238.0 12.74 L240.0 12.75 L242.0 12.74 L244.0 13.14 L246.0 13.06 L248.0 13.14 L250.0 13.29 L252.0 13.28 L254.0 13.13 L256.0 13.38 L258.0 13.34 L260.0 12.99 L262.0 13.16 L264.0 12.95 L266.0 12.44 L266.0 19.56 L264.0 19.05 L262.0 18.84 L260.0 19.01 L258.0 18.66 L256.0 18.62 L254.0 18.87 L252.0 18.72 L250.0 18.71 L248.0 18.86 L246.0 18.94 L244.0 18.86 L242.0 19.26 L240.0 19.25 L238.0 19.26 L236.0 19.42 L234.0 19.37 L232.0 19.44 L230.0 19.73 L228.0 19.13 L226.0 19.12 L224.0 18.72 L222.0 18.89 L220.0 19.04 L218.0 19.10 L216.0 19.15 L214.0 19.03 L212.0 18.87 L210.0 18.53 L208.0 18.61 L206.0 18.75 L204.0 18.87 L202.0 18.98 L200.0 18.90 L198.0 18.97 L196.0 19.15 L194.0 19.32 L192.0 19.07 L190.0 19.34 L188.0 19.30 L186.0 19.11 L184.0 19.48 L182.0 19.10 L180.0 18.67 L178.0 18.62 L176.0 18.43 L174.0 18.51 L172.0 18.42 L170.0 19.94 L168.0 18.74 L166.0 18.87 L164.0 18.44 L162.0 18.66 L160.0 18.31 L158.0 18.59 L156.0 18.63 L154.0 18.88 L152.0 18.61 L150.0 18.95 L148.0 18.76 L146.0 19.12 L144.0 19.04 L142.0 19.62 L140.0 19.08 L138.0 18.87 L136.0 18.81 L134.0 18.85 L132.0 18.73 L130.0 18.25 L128.0 18.11 L126.0 19.49 L124.0 18.88 L122.0 19.16 L120.0 20.02 L118.0 19.10 L116.0 19.06 L114.0 19.42 L112.0 19.06 L110.0 19.37 L108.0 19.23 L106.0 19.11 L104.0 19.14 L102.0 19.12 L100.0 19.19 L98.0 19.12 L96.0 18.79 L94.0 18.99 L92.0 18.82 L90.0 18.59 L88.0 18.60 L86.0 19.56 L84.0 18.39 L82.0 18.35 L80.0 18.24 L78.0 18.68 L76.0 18.70 L74.0 18.86 L72.0 19.06 L70.0 19.36 L68.0 19.27 L66.0 19.02 L64.0 19.07 L62.0 18.99 L60.0 19.25 L58.0 19.72 L56.0 19.16 L54.0 19.05 L52.0 19.20 L50.0 19.16 L48.0 19.87 L46.0 19.13 L44.0 18.86 L42.0 18.51 L40.0 18.51 L38.0 18.40 L36.0 18.58 L34.0 18.15 L32.0 18.42 L30.0 18.50 L28.0 18.18 L26.0 18.27 L24.0 18.30 L22.0 18.53 L20.0 18.29 L18.0 18.67 L16.0 18.46 L14.0 18.52 L12.0 18.74 L10.0 18.76 L8.0 19.04 L6.0 18.22 L4.0 17.54 L2.0 17.33 L0.0 16.48 Z" fill="#efefef"/></svg><div class="r" style="left:0.00px;top:515.00px;width:340.00px;height:453.50px;background:#38a038;"></div><div class="r" style="left:0.00px;top:487.90px;width:340.00px;height:27.10px;background:#3c713c;"></div><div class="t" style="left:4.70px;top:495px;font-size:13.8px;color:#f4f4f4;font-weight:normal;letter-spacing:-0.09px">musicas 6<span class="o">o</span> A</div><svg class="r" style="left:317.20px;top:492.85px;" width="18" height="18" viewBox="0 0 18 18"><circle cx="9" cy="9" r="7.4" fill="none" stroke="rgba(240,244,250,0.85)" stroke-width="1.5"/><path d="M7.7 5.6 L12.4 9 L7.7 12.4Z" fill="rgba(240,244,250,0.85)"/></svg><svg class="r" style="left:4.00px;top:519.30px;" width="57" height="56" viewBox="0 0 57 56"><defs><filter id="u5" x="-20%" y="-20%" width="140%" height="140%"><feGaussianBlur stdDeviation="1.3"/></filter><clipPath id="cu5"><rect width="57" height="56"/></clipPath></defs><g clip-path="url(#cu5)"><rect width="57" height="56" fill="#3c3a8a"/><g filter="url(#u5)"><rect x="-3" y="-3" width="63" height="20" fill="#8a5480"/><path d="M-3 17 V6 Q7 -2 14 6 Q18 11 20 17Z" fill="#e8704e"/><rect x="38" y="-3" width="22" height="20" fill="#22204a"/><rect x="42" y="11" width="12" height="4" fill="#5a6a5a"/><rect x="-3" y="17" width="63" height="22" fill="#34327e"/><rect x="50" y="17" width="10" height="22" fill="#7a4a78"/><rect x="-3" y="39" width="63" height="20" fill="#4ea24a"/><rect x="-3" y="39" width="63" height="3" fill="#8cc080"/></g><g filter="url(#fb05)"><path d="M23.5 25 H34.5 L35 41 H32.5 L33 55 H30 L29 45 L28 55 H25 L25.5 41 H23Z" fill="#2e3490"/><rect x="26.5" y="30" width="6" height="10" fill="#a83848"/><path d="M21 19 L34 3 L40 4 L40 11 L27 22Z" fill="#d2b260"/><ellipse cx="30" cy="21" rx="12" ry="3.8" fill="#363636" transform="rotate(-18 30 21)"/></g></g><circle cx="28.7" cy="29.3" r="10.6" fill="none" stroke="rgba(230,230,240,0.32)" stroke-width="4.3"/><path d="M39.3 28.3 A10.6 10.6 0 0 1 20.7 36.3" fill="none" stroke="rgba(235,235,240,0.8)" stroke-width="4.3"/></svg><div class="t" style="left:67.30px;top:519px;font-size:11.85px;color:#f4f4f4;font-weight:normal;letter-spacing:-0.051px">08 - Es Sakūru Uguntiņu.mp3</div><div class="t" style="right:681.00px;top:519px;font-size:11.85px;color:#f4f4f4;font-weight:normal;">9.76s</div><svg class="r" style="left:67.00px;top:529.50px;" width="266" height="32" viewBox="0 0 266 32"><path d="M0 16 L0.0 15.44 L2.0 14.82 L4.0 14.10 L6.0 13.57 L8.0 12.65 L10.0 12.93 L12.0 13.27 L14.0 13.39 L16.0 13.67 L18.0 13.67 L20.0 13.46 L22.0 13.22 L24.0 13.41 L26.0 13.09 L28.0 13.56 L30.0 13.36 L32.0 13.37 L34.0 13.64 L36.0 13.21 L38.0 13.26 L40.0 13.12 L42.0 13.34 L44.0 13.31 L46.0 13.24 L48.0 12.93 L50.0 13.34 L52.0 13.35 L54.0 13.51 L56.0 13.61 L58.0 13.81 L60.0 13.72 L62.0 13.57 L64.0 13.43 L66.0 13.68 L68.0 13.40 L70.0 13.36 L72.0 13.32 L74.0 13.53 L76.0 12.90 L78.0 12.98 L80.0 12.76 L82.0 12.68 L84.0 12.62 L86.0 12.92 L88.0 12.71 L90.0 12.98 L92.0 13.32 L94.0 13.57 L96.0 13.74 L98.0 13.66 L100.0 13.37 L102.0 12.89 L104.0 12.64 L106.0 13.10 L108.0 13.42 L110.0 13.32 L112.0 13.62 L114.0 13.58 L116.0 13.45 L118.0 13.11 L120.0 12.93 L122.0 13.17 L124.0 13.38 L126.0 13.73 L128.0 13.48 L130.0 13.86 L132.0 13.73 L134.0 13.64 L136.0 13.95 L138.0 13.54 L140.0 13.10 L142.0 12.87 L144.0 12.64 L146.0 13.04 L148.0 13.18 L150.0 13.56 L152.0 13.41 L154.0 13.63 L156.0 13.56 L158.0 13.34 L160.0 13.40 L162.0 13.21 L164.0 13.10 L166.0 12.77 L168.0 12.53 L170.0 12.65 L172.0 12.77 L174.0 12.77 L176.0 12.89 L178.0 12.91 L180.0 12.91 L182.0 13.16 L184.0 13.40 L186.0 13.33 L188.0 13.11 L190.0 12.94 L192.0 12.74 L194.0 12.61 L196.0 12.75 L198.0 13.13 L200.0 13.04 L202.0 13.02 L204.0 12.99 L206.0 12.95 L208.0 12.88 L210.0 13.13 L212.0 13.19 L214.0 13.55 L216.0 13.56 L218.0 13.31 L220.0 13.04 L222.0 12.89 L224.0 12.49 L226.0 12.66 L228.0 12.79 L230.0 13.12 L232.0 12.95 L234.0 13.02 L236.0 12.74 L238.0 12.71 L240.0 12.51 L242.0 12.59 L244.0 12.56 L246.0 12.77 L248.0 12.67 L250.0 12.74 L252.0 12.95 L254.0 13.39 L256.0 13.30 L258.0 13.28 L260.0 13.33 L262.0 13.19 L264.0 13.18 L266.0 13.40 L266.0 18.60 L264.0 18.82 L262.0 18.81 L260.0 18.67 L258.0 18.72 L256.0 18.70 L254.0 18.61 L252.0 19.05 L250.0 19.26 L248.0 19.33 L246.0 19.23 L244.0 19.44 L242.0 19.41 L240.0 19.49 L238.0 19.29 L236.0 19.26 L234.0 18.98 L232.0 19.05 L230.0 18.88 L228.0 19.21 L226.0 19.34 L224.0 19.51 L222.0 19.11 L220.0 18.96 L218.0 18.69 L216.0 18.44 L214.0 18.45 L212.0 18.81 L210.0 18.87 L208.0 19.12 L206.0 19.05 L204.0 19.01 L202.0 18.98 L200.0 18.96 L198.0 18.87 L196.0 19.25 L194.0 19.39 L192.0 19.26 L190.0 19.06 L188.0 18.89 L186.0 18.67 L184.0 18.60 L182.0 18.84 L180.0 19.09 L178.0 19.09 L176.0 19.11 L174.0 19.23 L172.0 19.23 L170.0 19.35 L168.0 19.47 L166.0 19.23 L164.0 18.90 L162.0 18.79 L160.0 18.60 L158.0 18.66 L156.0 18.44 L154.0 18.37 L152.0 18.59 L150.0 18.44 L148.0 18.82 L146.0 18.96 L144.0 19.36 L142.0 19.13 L140.0 18.90 L138.0 18.46 L136.0 18.05 L134.0 18.36 L132.0 18.27 L130.0 18.14 L128.0 18.52 L126.0 18.27 L124.0 18.62 L122.0 18.83 L120.0 19.07 L118.0 18.89 L116.0 18.55 L114.0 18.42 L112.0 18.38 L110.0 18.68 L108.0 18.58 L106.0 18.90 L104.0 19.36 L102.0 19.11 L100.0 18.63 L98.0 18.34 L96.0 18.26 L94.0 18.43 L92.0 18.68 L90.0 19.02 L88.0 19.29 L86.0 19.08 L84.0 19.38 L82.0 19.32 L80.0 19.24 L78.0 19.02 L76.0 19.10 L74.0 18.47 L72.0 18.68 L70.0 18.64 L68.0 18.60 L66.0 18.32 L64.0 18.57 L62.0 18.43 L60.0 18.28 L58.0 18.19 L56.0 18.39 L54.0 18.49 L52.0 18.65 L50.0 18.66 L48.0 19.07 L46.0 18.76 L44.0 18.69 L42.0 18.66 L40.0 18.88 L38.0 18.74 L36.0 18.79 L34.0 18.36 L32.0 18.63 L30.0 18.64 L28.0 18.44 L26.0 18.91 L24.0 18.59 L22.0 18.78 L20.0 18.54 L18.0 18.33 L16.0 18.33 L14.0 18.61 L12.0 18.73 L10.0 19.07 L8.0 19.35 L6.0 18.43 L4.0 17.90 L2.0 17.18 L0.0 16.56 Z" fill="#efefef"/></svg><svg class="r" style="left:4.00px;top:584.00px;" width="57" height="56" viewBox="0 0 57 56"><defs><filter id="u6" x="-20%" y="-20%" width="140%" height="140%"><feGaussianBlur stdDeviation="1.0"/></filter><clipPath id="cu6"><rect width="57" height="56"/></clipPath><linearGradient id="gu6" x1="0" y1="0" x2="1" y2="0.7"><stop offset="0" stop-color="#0e1868"/><stop offset="0.5" stop-color="#203c90"/><stop offset="0.8" stop-color="#3a8ab8"/><stop offset="1" stop-color="#7ae0e8"/></linearGradient></defs><g clip-path="url(#cu6)"><rect width="57" height="56" fill="url(#gu6)"/><g filter="url(#u6)"><path d="M3 60 Q4 40 14 34 L22 30 L38 30 Q50 36 56 60Z" fill="#d8c49a"/><path d="M36 30 Q50 36 56 58 V60 H40 Q40 44 36 30Z" fill="#b04a1e"/><path d="M19 30 Q18 8 29 6 Q40 8 39 30 Q30 36 19 30Z" fill="#6a3418"/><ellipse cx="29" cy="17" rx="6" ry="8.5" fill="#b48474"/><ellipse cx="26.5" cy="13" rx="1" ry="1.2" fill="#222"/><ellipse cx="31.5" cy="13" rx="1" ry="1.2" fill="#222"/><path d="M11 38 Q10 28 13 23 Q15 22 16 26 L17 38Z" fill="#c89878"/><path d="M26 44 Q29 40 32 44 Q31 49 29 50 Q27 49 26 44Z" fill="#b02a18"/><path d="M38 52 Q44 48 46 54 L44 58 H38Z" fill="#c89070"/></g></g><path d="M40 31 A11.5 11.5 0 0 1 18 36" fill="none" stroke="rgba(240,236,232,0.9)" stroke-width="4"/></svg><div class="t" style="left:67.30px;top:583px;font-size:11.85px;color:#f4f4f4;font-weight:normal;letter-spacing:-0.011px">Cristo del Salvador.mp3</div><div class="t" style="right:681.00px;top:583px;font-size:11.85px;color:#f4f4f4;font-weight:normal;">34.05s</div><svg class="r" style="left:67.00px;top:594.20px;" width="266" height="32" viewBox="0 0 266 32"><path d="M0 16 L0 14.63 L1 13.85 L2 13.04 L3 12.37 L4 11.84 L5 11.08 L6 10.88 L7 11.05 L8 11.03 L9 11.03 L10 10.62 L11 10.28 L12 10.51 L13 10.77 L14 10.70 L15 10.50 L16 10.45 L17 10.11 L18 10.00 L19 10.00 L20 10.25 L21 10.52 L22 10.46 L23 10.65 L24 10.61 L25 10.29 L26 10.63 L27 10.79 L28 10.45 L29 10.06 L30 9.73 L31 9.55 L32 10.05 L33 10.30 L34 10.73 L35 10.43 L36 9.98 L37 9.52 L38 9.65 L39 10.28 L40 10.70 L41 10.69 L42 10.51 L43 9.92 L44 9.76 L45 10.25 L46 10.55 L47 10.51 L48 10.87 L49 11.02 L50 11.16 L51 11.25 L52 11.35 L53 11.56 L54 11.87 L55 11.90 L56 11.58 L57 11.45 L58 11.55 L59 11.49 L60 11.51 L61 11.49 L62 11.63 L63 11.60 L64 11.73 L65 11.88 L66 12.26 L67 12.33 L68 12.39 L69 11.83 L70 11.11 L71 10.40 L72 11.20 L73 11.58 L74 12.06 L75 11.93 L76 11.81 L77 11.48 L78 11.52 L79 11.40 L80 11.79 L81 11.93 L82 11.85 L83 12.08 L84 12.05 L85 12.22 L86 11.92 L87 11.97 L88 11.75 L89 11.90 L90 11.81 L91 11.88 L92 12.24 L93 12.12 L94 11.96 L95 11.68 L96 11.59 L97 11.83 L98 11.85 L99 11.83 L100 12.05 L101 11.81 L102 11.66 L103 11.29 L104 11.56 L105 11.70 L106 12.15 L107 12.10 L108 12.48 L109 11.99 L110 11.86 L111 11.84 L112 11.77 L113 11.48 L114 11.71 L115 12.08 L116 12.49 L117 12.71 L118 12.53 L119 12.44 L120 12.42 L121 12.25 L122 12.31 L123 12.49 L124 12.54 L125 12.69 L126 12.58 L127 12.65 L128 12.57 L129 12.58 L130 12.22 L131 12.40 L132 12.67 L133 12.49 L134 12.10 L135 11.84 L136 11.71 L137 12.22 L138 12.31 L139 12.81 L140 13.16 L141 12.75 L142 12.83 L143 12.47 L144 12.36 L145 12.46 L146 12.34 L147 12.07 L148 11.90 L149 11.39 L150 11.73 L151 11.96 L152 12.14 L153 12.18 L154 12.34 L155 12.47 L156 12.20 L157 12.35 L158 11.94 L159 11.89 L160 11.49 L161 11.29 L162 11.41 L163 11.76 L164 11.66 L165 11.21 L166 10.73 L167 10.28 L168 10.60 L169 10.90 L170 11.43 L171 11.71 L172 11.71 L173 11.34 L174 11.36 L175 11.06 L176 10.90 L177 10.91 L178 10.57 L179 10.86 L180 11.14 L181 10.69 L182 10.48 L183 10.68 L184 11.30 L185 11.70 L186 12.02 L187 12.10 L188 11.87 L189 11.53 L190 11.49 L191 11.63 L192 11.84 L193 11.98 L194 11.53 L195 11.31 L196 11.02 L197 10.94 L198 10.79 L199 10.65 L200 10.34 L201 10.54 L202 10.73 L203 10.94 L204 11.17 L205 11.63 L206 11.36 L207 11.03 L208 10.98 L209 10.68 L210 10.64 L211 11.18 L212 11.17 L213 11.46 L214 11.69 L215 11.43 L216 11.49 L217 10.81 L218 10.73 L219 10.67 L220 10.84 L221 11.29 L222 11.42 L223 11.04 L224 10.34 L225 10.74 L226 11.51 L227 11.69 L228 12.13 L229 11.69 L230 10.98 L231 10.58 L232 10.10 L233 10.51 L234 10.90 L235 11.44 L236 11.41 L237 11.55 L238 11.40 L239 11.51 L240 11.16 L241 10.97 L242 10.84 L243 10.48 L244 10.26 L245 10.38 L246 10.17 L247 10.06 L248 10.23 L249 10.51 L250 10.50 L251 10.87 L252 11.04 L253 11.19 L254 10.83 L255 10.19 L256 10.62 L257 11.14 L258 11.89 L259 11.79 L260 11.83 L261 11.47 L262 11.78 L263 11.70 L264 11.86 L265 11.74 L266 11.93 L266 19.81 L265 20.00 L264 20.43 L263 20.22 L262 20.35 L261 20.47 L260 20.20 L259 20.02 L258 20.28 L257 20.51 L256 21.14 L255 21.49 L254 21.24 L253 20.97 L252 21.21 L251 21.57 L250 21.75 L249 21.87 L248 21.98 L247 21.78 L246 21.70 L245 21.67 L244 21.47 L243 21.36 L242 21.15 L241 20.81 L240 20.70 L239 20.65 L238 20.61 L237 20.55 L236 20.67 L235 20.90 L234 21.12 L233 21.81 L232 21.28 L231 20.71 L230 20.07 L229 19.90 L228 20.00 L227 19.76 L226 20.63 L225 21.06 L224 21.71 L223 21.59 L222 20.81 L221 20.64 L220 20.67 L219 21.11 L218 21.21 L217 21.07 L216 20.70 L215 20.37 L214 20.48 L213 20.95 L212 20.99 L211 20.85 L210 20.65 L209 20.46 L208 20.61 L207 20.25 L206 20.72 L205 20.95 L204 21.25 L203 21.46 L202 21.69 L201 21.47 L200 20.99 L199 20.72 L198 20.88 L197 20.48 L196 20.56 L195 20.26 L194 20.02 L193 20.18 L192 20.50 L191 20.51 L190 20.82 L189 20.37 L188 20.11 L187 20.06 L186 19.96 L185 20.18 L184 20.50 L183 20.77 L182 21.12 L181 21.41 L180 21.15 L179 20.88 L178 20.97 L177 21.33 L176 21.36 L175 21.28 L174 21.01 L173 20.76 L172 20.58 L171 20.44 L170 20.36 L169 20.89 L168 21.22 L167 21.54 L166 21.22 L165 20.75 L164 20.61 L163 20.86 L162 20.76 L161 20.51 L160 20.57 L159 20.30 L158 20.10 L157 19.53 L156 19.49 L155 19.71 L154 19.50 L153 19.55 L152 19.74 L151 19.87 L150 19.99 L149 20.31 L148 20.54 L147 20.05 L146 19.94 L145 19.87 L144 19.57 L143 19.57 L142 19.35 L141 19.18 L140 19.03 L139 19.34 L138 19.52 L137 19.90 L136 20.16 L135 19.85 L134 19.35 L133 19.16 L132 19.12 L131 19.62 L130 19.62 L129 20.02 L128 19.66 L127 19.36 L126 19.69 L125 19.56 L124 19.60 L123 19.40 L122 19.39 L121 19.44 L120 19.16 L119 19.34 L118 19.01 L117 19.30 L116 19.41 L115 19.57 L114 19.91 L113 20.53 L112 20.20 L111 20.15 L110 20.47 L109 20.37 L108 19.69 L107 19.43 L106 19.58 L105 19.78 L104 20.13 L103 20.45 L102 20.70 L101 20.57 L100 20.53 L99 20.41 L98 20.64 L97 20.45 L96 20.07 L95 20.09 L94 20.28 L93 20.46 L92 20.53 L91 20.49 L90 20.54 L89 20.17 L88 20.35 L87 19.94 L86 19.81 L85 20.18 L84 20.20 L83 20.03 L82 20.09 L81 20.22 L80 20.19 L79 20.62 L78 20.69 L77 20.55 L76 20.23 L75 20.26 L74 20.20 L73 20.11 L72 20.29 L71 20.75 L70 20.83 L69 20.09 L68 19.60 L67 20.03 L66 19.88 L65 20.09 L64 20.45 L63 20.30 L62 20.54 L61 20.43 L60 20.47 L59 20.62 L58 20.64 L57 20.80 L56 20.60 L55 20.43 L54 20.49 L53 20.13 L52 20.47 L51 20.65 L50 21.00 L49 20.97 L48 21.10 L47 21.13 L46 20.97 L45 21.22 L44 21.51 L43 21.94 L42 22.40 L41 22.25 L40 21.79 L39 21.93 L38 22.39 L37 22.33 L36 21.98 L35 21.41 L34 21.02 L33 21.22 L32 21.37 L31 21.79 L30 22.35 L29 22.10 L28 21.43 L27 21.07 L26 21.21 L25 21.41 L24 21.38 L23 21.56 L22 21.15 L21 21.15 L20 21.24 L19 21.59 L18 21.82 L17 21.76 L16 21.96 L15 21.89 L14 21.43 L13 21.32 L12 21.42 L11 21.91 L10 21.72 L9 21.31 L8 21.05 L7 21.05 L6 21.13 L5 20.69 L4 20.20 L3 19.53 L2 18.95 L1 18.10 L0 17.38 Z" fill="#efefef"/></svg><svg class="r" style="left:4.00px;top:648.70px;" width="57" height="56" viewBox="0 0 57 56"><defs><filter id="u7" x="-20%" y="-20%" width="140%" height="140%"><feGaussianBlur stdDeviation="1.3"/></filter><clipPath id="cu7"><rect width="57" height="56"/></clipPath></defs><g clip-path="url(#cu7)"><rect width="57" height="56" fill="#3c3a8a"/><g filter="url(#u7)"><rect x="-3" y="-3" width="63" height="20" fill="#8a5480"/><path d="M-3 17 V6 Q7 -2 14 6 Q18 11 20 17Z" fill="#e8704e"/><rect x="38" y="-3" width="22" height="20" fill="#22204a"/><rect x="42" y="11" width="12" height="4" fill="#5a6a5a"/><rect x="-3" y="17" width="63" height="22" fill="#34327e"/><rect x="50" y="17" width="10" height="22" fill="#7a4a78"/><rect x="-3" y="39" width="63" height="20" fill="#4ea24a"/><rect x="-3" y="39" width="63" height="3" fill="#8cc080"/></g><g filter="url(#fb05)"><path d="M23.5 25 H34.5 L35 41 H32.5 L33 55 H30 L29 45 L28 55 H25 L25.5 41 H23Z" fill="#2e3490"/><rect x="26.5" y="30" width="6" height="10" fill="#a83848"/><path d="M21 19 L34 3 L40 4 L40 11 L27 22Z" fill="#d2b260"/><ellipse cx="30" cy="21" rx="12" ry="3.8" fill="#363636" transform="rotate(-18 30 21)"/></g></g><circle cx="28.7" cy="29.3" r="10.6" fill="none" stroke="rgba(230,230,240,0.32)" stroke-width="4.3"/><path d="M39.3 28.3 A10.6 10.6 0 0 1 20.7 36.3" fill="none" stroke="rgba(235,235,240,0.8)" stroke-width="4.3"/></svg><div class="t" style="left:67.30px;top:648px;font-size:11.85px;color:#f4f4f4;font-weight:normal;letter-spacing:-0.138px">17 Till Flickan Som Är Tusen År-Halling Fran...</div><div class="t" style="right:681.00px;top:648px;font-size:11.85px;color:#f4f4f4;font-weight:normal;">2.57s</div><svg class="r" style="left:67.00px;top:658.90px;" width="266" height="32" viewBox="0 0 266 32"><path d="M0 16 L0.0 15.23 L2.0 14.49 L4.0 13.72 L6.0 13.08 L8.0 12.58 L10.0 12.31 L12.0 12.66 L14.0 12.54 L16.0 12.41 L18.0 12.62 L20.0 12.41 L22.0 12.51 L24.0 12.22 L26.0 12.14 L28.0 12.12 L30.0 11.90 L32.0 12.08 L34.0 12.02 L36.0 12.26 L38.0 12.46 L40.0 12.60 L42.0 12.43 L44.0 12.35 L46.0 12.50 L48.0 12.39 L50.0 12.56 L52.0 12.17 L54.0 12.06 L56.0 11.84 L58.0 11.84 L60.0 11.94 L62.0 11.78 L64.0 11.59 L66.0 11.87 L68.0 11.77 L70.0 11.97 L72.0 12.01 L74.0 12.04 L76.0 11.79 L78.0 12.09 L80.0 12.06 L82.0 11.94 L84.0 11.59 L86.0 11.77 L88.0 11.57 L90.0 11.67 L92.0 11.82 L94.0 12.13 L96.0 12.26 L98.0 12.43 L100.0 12.18 L102.0 12.02 L104.0 11.74 L106.0 11.81 L108.0 12.32 L110.0 12.50 L112.0 12.57 L114.0 12.61 L116.0 12.56 L118.0 12.57 L120.0 12.72 L122.0 12.83 L124.0 12.66 L126.0 12.67 L128.0 12.58 L130.0 12.38 L132.0 12.42 L134.0 12.41 L136.0 12.32 L138.0 12.20 L140.0 12.29 L142.0 11.78 L144.0 11.74 L146.0 11.75 L148.0 11.93 L150.0 12.25 L152.0 12.31 L154.0 12.36 L156.0 12.02 L158.0 12.13 L160.0 12.08 L162.0 12.02 L164.0 12.02 L166.0 11.94 L168.0 12.05 L170.0 12.11 L172.0 12.14 L174.0 12.24 L176.0 12.18 L178.0 12.30 L180.0 11.92 L182.0 11.99 L184.0 12.16 L186.0 12.19 L188.0 12.29 L190.0 12.43 L192.0 12.59 L194.0 12.31 L196.0 12.26 L198.0 12.47 L200.0 12.47 L202.0 12.61 L204.0 12.57 L206.0 12.44 L208.0 12.46 L210.0 12.19 L212.0 12.34 L214.0 12.28 L216.0 11.87 L218.0 12.09 L220.0 12.33 L222.0 12.26 L224.0 12.51 L226.0 12.35 L228.0 12.21 L230.0 12.30 L232.0 12.40 L234.0 12.55 L236.0 12.44 L238.0 12.45 L240.0 12.18 L242.0 12.29 L244.0 12.22 L246.0 12.42 L248.0 12.46 L250.0 12.23 L252.0 12.18 L254.0 12.25 L256.0 12.26 L258.0 12.17 L260.0 12.04 L262.0 12.08 L264.0 11.88 L266.0 11.93 L266.0 20.07 L264.0 20.12 L262.0 19.92 L260.0 19.96 L258.0 19.83 L256.0 19.74 L254.0 19.75 L252.0 19.82 L250.0 19.77 L248.0 19.54 L246.0 19.58 L244.0 19.78 L242.0 19.71 L240.0 19.82 L238.0 19.55 L236.0 19.56 L234.0 19.45 L232.0 19.60 L230.0 19.70 L228.0 19.79 L226.0 19.65 L224.0 19.49 L222.0 19.74 L220.0 19.67 L218.0 19.91 L216.0 20.13 L214.0 19.72 L212.0 19.66 L210.0 19.81 L208.0 19.54 L206.0 19.56 L204.0 19.43 L202.0 19.39 L200.0 19.53 L198.0 19.53 L196.0 19.74 L194.0 19.69 L192.0 19.41 L190.0 19.57 L188.0 19.71 L186.0 19.81 L184.0 19.84 L182.0 20.01 L180.0 20.08 L178.0 19.70 L176.0 19.82 L174.0 19.76 L172.0 19.86 L170.0 19.89 L168.0 19.95 L166.0 20.06 L164.0 19.98 L162.0 19.98 L160.0 19.92 L158.0 19.87 L156.0 19.98 L154.0 19.64 L152.0 19.69 L150.0 19.75 L148.0 20.07 L146.0 20.25 L144.0 20.26 L142.0 20.22 L140.0 19.71 L138.0 19.80 L136.0 19.68 L134.0 19.59 L132.0 19.58 L130.0 19.62 L128.0 19.42 L126.0 19.33 L124.0 19.34 L122.0 19.17 L120.0 19.28 L118.0 19.43 L116.0 19.44 L114.0 19.39 L112.0 19.43 L110.0 19.50 L108.0 19.68 L106.0 20.19 L104.0 20.26 L102.0 19.98 L100.0 19.82 L98.0 19.57 L96.0 19.74 L94.0 19.87 L92.0 20.18 L90.0 20.33 L88.0 20.43 L86.0 20.23 L84.0 20.41 L82.0 20.06 L80.0 19.94 L78.0 19.91 L76.0 20.21 L74.0 19.96 L72.0 19.99 L70.0 20.03 L68.0 20.23 L66.0 20.13 L64.0 20.41 L62.0 20.22 L60.0 20.06 L58.0 20.16 L56.0 20.16 L54.0 19.94 L52.0 19.83 L50.0 19.44 L48.0 19.61 L46.0 19.50 L44.0 19.65 L42.0 19.57 L40.0 19.40 L38.0 19.54 L36.0 19.74 L34.0 19.98 L32.0 19.92 L30.0 20.10 L28.0 19.88 L26.0 19.86 L24.0 19.78 L22.0 19.49 L20.0 19.59 L18.0 19.38 L16.0 19.59 L14.0 19.46 L12.0 19.34 L10.0 19.69 L8.0 19.42 L6.0 18.92 L4.0 18.28 L2.0 17.51 L0.0 16.77 Z" fill="#efefef"/></svg><svg class="r" style="left:4.00px;top:713.40px;" width="57" height="56" viewBox="0 0 57 56"><defs><filter id="u8" x="-20%" y="-20%" width="140%" height="140%"><feGaussianBlur stdDeviation="1.3"/></filter><clipPath id="cu8"><rect width="57" height="56"/></clipPath></defs><g clip-path="url(#cu8)"><rect width="57" height="56" fill="#3c3a8a"/><g filter="url(#u8)"><rect x="-3" y="-3" width="63" height="20" fill="#8a5480"/><path d="M-3 17 V6 Q7 -2 14 6 Q18 11 20 17Z" fill="#e8704e"/><rect x="38" y="-3" width="22" height="20" fill="#22204a"/><rect x="42" y="11" width="12" height="4" fill="#5a6a5a"/><rect x="-3" y="17" width="63" height="22" fill="#34327e"/><rect x="50" y="17" width="10" height="22" fill="#7a4a78"/><rect x="-3" y="39" width="63" height="20" fill="#4ea24a"/><rect x="-3" y="39" width="63" height="3" fill="#8cc080"/></g><g filter="url(#fb05)"><path d="M23.5 25 H34.5 L35 41 H32.5 L33 55 H30 L29 45 L28 55 H25 L25.5 41 H23Z" fill="#2e3490"/><rect x="26.5" y="30" width="6" height="10" fill="#a83848"/><path d="M21 19 L34 3 L40 4 L40 11 L27 22Z" fill="#d2b260"/><ellipse cx="30" cy="21" rx="12" ry="3.8" fill="#363636" transform="rotate(-18 30 21)"/></g></g><circle cx="28.7" cy="29.3" r="10.6" fill="none" stroke="rgba(230,230,240,0.32)" stroke-width="4.3"/><path d="M39.3 28.3 A10.6 10.6 0 0 1 20.7 36.3" fill="none" stroke="rgba(235,235,240,0.8)" stroke-width="4.3"/></svg><div class="t" style="left:67.30px;top:713px;font-size:11.85px;color:#f4f4f4;font-weight:normal;letter-spacing:0.006px">Introit Rorate Caeli Desuper - Lionheart.mp3</div><div class="t" style="right:681.00px;top:713px;font-size:11.85px;color:#f4f4f4;font-weight:normal;">8.27s</div><svg class="r" style="left:67.00px;top:723.60px;" width="266" height="32" viewBox="0 0 266 32"><path d="M0 16 L0.0 15.34 L2.0 14.80 L4.0 14.04 L6.0 13.61 L8.0 12.77 L10.0 12.76 L12.0 12.65 L14.0 12.67 L16.0 12.80 L18.0 12.97 L20.0 13.10 L22.0 13.05 L24.0 13.10 L26.0 13.18 L28.0 12.63 L30.0 12.57 L32.0 12.39 L34.0 12.70 L36.0 12.94 L38.0 13.29 L40.0 13.27 L42.0 13.28 L44.0 13.17 L46.0 13.14 L48.0 12.93 L50.0 12.94 L52.0 13.30 L54.0 13.29 L56.0 13.41 L58.0 13.18 L60.0 12.97 L62.0 13.19 L64.0 12.93 L66.0 13.09 L68.0 13.16 L70.0 12.81 L72.0 12.96 L74.0 12.95 L76.0 12.67 L78.0 12.58 L80.0 12.43 L82.0 12.50 L84.0 12.69 L86.0 12.80 L88.0 13.01 L90.0 13.12 L92.0 13.22 L94.0 13.30 L96.0 13.18 L98.0 13.22 L100.0 12.99 L102.0 13.06 L104.0 12.96 L106.0 12.74 L108.0 12.85 L110.0 12.62 L112.0 12.45 L114.0 12.50 L116.0 12.74 L118.0 12.99 L120.0 13.30 L122.0 12.96 L124.0 13.16 L126.0 12.63 L128.0 12.80 L130.0 12.57 L132.0 12.99 L134.0 12.70 L136.0 12.82 L138.0 12.68 L140.0 12.75 L142.0 12.81 L144.0 12.45 L146.0 12.71 L148.0 12.97 L150.0 12.87 L152.0 12.96 L154.0 12.92 L156.0 12.92 L158.0 12.82 L160.0 12.58 L162.0 12.66 L164.0 12.85 L166.0 12.80 L168.0 12.71 L170.0 12.69 L172.0 12.74 L174.0 12.72 L176.0 12.71 L178.0 12.72 L180.0 12.65 L182.0 12.46 L184.0 12.56 L186.0 12.36 L188.0 12.48 L190.0 12.62 L192.0 12.91 L194.0 12.84 L196.0 12.97 L198.0 13.25 L200.0 12.97 L202.0 13.07 L204.0 13.20 L206.0 13.14 L208.0 13.36 L210.0 13.21 L212.0 12.78 L214.0 12.39 L216.0 12.30 L218.0 12.62 L220.0 12.54 L222.0 12.58 L224.0 12.71 L226.0 12.69 L228.0 12.77 L230.0 13.17 L232.0 13.19 L234.0 12.97 L236.0 12.54 L238.0 12.52 L240.0 12.18 L242.0 12.27 L244.0 12.53 L246.0 12.61 L248.0 12.54 L250.0 12.58 L252.0 12.73 L254.0 12.46 L256.0 12.69 L258.0 12.60 L260.0 12.31 L262.0 12.30 L264.0 12.49 L266.0 12.60 L266.0 19.40 L264.0 19.51 L262.0 19.70 L260.0 19.69 L258.0 19.40 L256.0 19.31 L254.0 19.54 L252.0 19.27 L250.0 19.42 L248.0 19.46 L246.0 19.39 L244.0 19.47 L242.0 19.73 L240.0 19.82 L238.0 19.48 L236.0 19.46 L234.0 19.03 L232.0 18.81 L230.0 18.83 L228.0 19.23 L226.0 19.31 L224.0 19.29 L222.0 19.42 L220.0 19.46 L218.0 19.38 L216.0 19.70 L214.0 19.61 L212.0 19.22 L210.0 18.79 L208.0 18.64 L206.0 18.86 L204.0 18.80 L202.0 18.93 L200.0 19.03 L198.0 18.75 L196.0 19.03 L194.0 19.16 L192.0 19.09 L190.0 19.38 L188.0 19.52 L186.0 19.64 L184.0 19.44 L182.0 19.54 L180.0 19.35 L178.0 19.28 L176.0 19.29 L174.0 19.28 L172.0 19.26 L170.0 19.31 L168.0 19.29 L166.0 19.20 L164.0 19.15 L162.0 19.34 L160.0 19.42 L158.0 19.18 L156.0 19.08 L154.0 19.08 L152.0 19.04 L150.0 19.13 L148.0 19.03 L146.0 19.29 L144.0 19.55 L142.0 19.19 L140.0 19.25 L138.0 19.32 L136.0 19.18 L134.0 19.30 L132.0 19.01 L130.0 19.43 L128.0 19.20 L126.0 19.37 L124.0 18.84 L122.0 19.04 L120.0 18.70 L118.0 19.01 L116.0 19.26 L114.0 19.50 L112.0 19.55 L110.0 19.38 L108.0 19.15 L106.0 19.26 L104.0 19.04 L102.0 18.94 L100.0 19.01 L98.0 18.78 L96.0 18.82 L94.0 18.70 L92.0 18.78 L90.0 18.88 L88.0 18.99 L86.0 19.20 L84.0 19.31 L82.0 19.50 L80.0 19.57 L78.0 19.42 L76.0 19.33 L74.0 19.05 L72.0 19.04 L70.0 19.19 L68.0 18.84 L66.0 18.91 L64.0 19.07 L62.0 18.81 L60.0 19.03 L58.0 18.82 L56.0 18.59 L54.0 18.71 L52.0 18.70 L50.0 19.06 L48.0 19.07 L46.0 18.86 L44.0 18.83 L42.0 18.72 L40.0 18.73 L38.0 18.71 L36.0 19.06 L34.0 19.30 L32.0 19.61 L30.0 19.43 L28.0 19.37 L26.0 18.82 L24.0 18.90 L22.0 18.95 L20.0 18.90 L18.0 19.03 L16.0 19.20 L14.0 19.33 L12.0 19.35 L10.0 19.24 L8.0 19.23 L6.0 18.39 L4.0 17.96 L2.0 17.20 L0.0 16.66 Z" fill="#efefef"/></svg><svg class="r" style="left:4.00px;top:778.10px;" width="57" height="56" viewBox="0 0 57 56"><defs><filter id="u9" x="-20%" y="-20%" width="140%" height="140%"><feGaussianBlur stdDeviation="1.3"/></filter><clipPath id="cu9"><rect width="57" height="56"/></clipPath></defs><g clip-path="url(#cu9)"><rect width="57" height="56" fill="#3c3a8a"/><g filter="url(#u9)"><rect x="-3" y="-3" width="63" height="20" fill="#8a5480"/><path d="M-3 17 V6 Q7 -2 14 6 Q18 11 20 17Z" fill="#e8704e"/><rect x="38" y="-3" width="22" height="20" fill="#22204a"/><rect x="42" y="11" width="12" height="4" fill="#5a6a5a"/><rect x="-3" y="17" width="63" height="22" fill="#34327e"/><rect x="50" y="17" width="10" height="22" fill="#7a4a78"/><rect x="-3" y="39" width="63" height="20" fill="#4ea24a"/><rect x="-3" y="39" width="63" height="3" fill="#8cc080"/></g><g filter="url(#fb05)"><path d="M23.5 25 H34.5 L35 41 H32.5 L33 55 H30 L29 45 L28 55 H25 L25.5 41 H23Z" fill="#2e3490"/><rect x="26.5" y="30" width="6" height="10" fill="#a83848"/><path d="M21 19 L34 3 L40 4 L40 11 L27 22Z" fill="#d2b260"/><ellipse cx="30" cy="21" rx="12" ry="3.8" fill="#363636" transform="rotate(-18 30 21)"/></g></g><circle cx="28.7" cy="29.3" r="10.6" fill="none" stroke="rgba(230,230,240,0.32)" stroke-width="4.3"/><path d="M39.3 28.3 A10.6 10.6 0 0 1 20.7 36.3" fill="none" stroke="rgba(235,235,240,0.8)" stroke-width="4.3"/></svg><div class="t" style="left:67.30px;top:778px;font-size:11.85px;color:#f4f4f4;font-weight:normal;letter-spacing:-0.01px">03 - Jaromír Horák &amp; Konrádyho dudácká ...</div><div class="t" style="right:681.00px;top:778px;font-size:11.85px;color:#f4f4f4;font-weight:normal;">4.85s</div><svg class="r" style="left:67.00px;top:788.30px;" width="266" height="32" viewBox="0 0 266 32"><path d="M0 16 L0.0 15.28 L2.0 14.53 L4.0 13.87 L6.0 13.57 L8.0 13.15 L10.0 13.05 L12.0 12.73 L14.0 12.80 L16.0 12.71 L18.0 12.49 L20.0 12.18 L22.0 12.25 L24.0 12.20 L26.0 12.15 L28.0 12.47 L30.0 12.38 L32.0 12.59 L34.0 12.36 L36.0 12.11 L38.0 12.36 L40.0 12.11 L42.0 12.19 L44.0 12.61 L46.0 12.80 L48.0 12.61 L50.0 12.60 L52.0 12.91 L54.0 12.65 L56.0 12.53 L58.0 12.84 L60.0 12.75 L62.0 13.03 L64.0 12.92 L66.0 12.72 L68.0 12.59 L70.0 12.36 L72.0 12.56 L74.0 12.38 L76.0 12.00 L78.0 11.94 L80.0 11.91 L82.0 11.99 L84.0 11.90 L86.0 12.20 L88.0 12.48 L90.0 12.14 L92.0 12.25 L94.0 12.13 L96.0 12.19 L98.0 12.17 L100.0 12.38 L102.0 12.63 L104.0 12.49 L106.0 12.63 L108.0 12.21 L110.0 12.36 L112.0 11.99 L114.0 12.10 L116.0 12.49 L118.0 12.67 L120.0 12.98 L122.0 12.75 L124.0 12.79 L126.0 12.79 L128.0 12.46 L130.0 12.62 L132.0 12.47 L134.0 12.12 L136.0 12.24 L138.0 12.11 L140.0 12.29 L142.0 12.00 L144.0 12.23 L146.0 12.37 L148.0 12.12 L150.0 12.57 L152.0 12.32 L154.0 12.36 L156.0 12.65 L158.0 13.03 L160.0 13.07 L162.0 12.98 L164.0 12.83 L166.0 12.67 L168.0 12.49 L170.0 12.75 L172.0 12.86 L174.0 12.71 L176.0 12.89 L178.0 12.90 L180.0 12.68 L182.0 12.60 L184.0 12.84 L186.0 12.58 L188.0 12.26 L190.0 12.02 L192.0 12.08 L194.0 11.99 L196.0 12.53 L198.0 12.56 L200.0 12.65 L202.0 12.48 L204.0 12.35 L206.0 12.23 L208.0 12.12 L210.0 11.93 L212.0 12.07 L214.0 11.89 L216.0 12.11 L218.0 11.99 L220.0 12.55 L222.0 12.97 L224.0 13.06 L226.0 12.89 L228.0 12.72 L230.0 12.65 L232.0 12.68 L234.0 12.53 L236.0 12.30 L238.0 12.42 L240.0 12.23 L242.0 12.69 L244.0 12.49 L246.0 12.73 L248.0 12.95 L250.0 12.89 L252.0 12.72 L254.0 12.40 L256.0 12.66 L258.0 12.34 L260.0 12.18 L262.0 12.08 L264.0 11.82 L266.0 11.97 L266.0 20.03 L264.0 20.18 L262.0 19.92 L260.0 19.82 L258.0 19.66 L256.0 19.34 L254.0 19.60 L252.0 19.28 L250.0 19.11 L248.0 19.05 L246.0 19.27 L244.0 19.51 L242.0 19.31 L240.0 19.77 L238.0 19.58 L236.0 19.70 L234.0 19.47 L232.0 19.32 L230.0 19.35 L228.0 19.28 L226.0 19.11 L224.0 18.94 L222.0 19.03 L220.0 19.45 L218.0 20.01 L216.0 19.89 L214.0 20.11 L212.0 19.93 L210.0 20.07 L208.0 19.88 L206.0 19.77 L204.0 19.65 L202.0 19.52 L200.0 19.35 L198.0 19.44 L196.0 19.47 L194.0 20.01 L192.0 19.92 L190.0 19.98 L188.0 19.74 L186.0 19.42 L184.0 19.16 L182.0 19.40 L180.0 19.32 L178.0 19.10 L176.0 19.11 L174.0 19.29 L172.0 19.14 L170.0 19.25 L168.0 19.51 L166.0 19.33 L164.0 19.17 L162.0 19.02 L160.0 18.93 L158.0 18.97 L156.0 19.35 L154.0 19.64 L152.0 19.68 L150.0 19.43 L148.0 19.88 L146.0 19.63 L144.0 19.77 L142.0 20.00 L140.0 19.71 L138.0 19.89 L136.0 19.76 L134.0 19.88 L132.0 19.53 L130.0 19.38 L128.0 19.54 L126.0 19.21 L124.0 19.21 L122.0 19.25 L120.0 19.02 L118.0 19.33 L116.0 19.51 L114.0 19.90 L112.0 20.01 L110.0 19.64 L108.0 19.79 L106.0 19.37 L104.0 19.51 L102.0 19.37 L100.0 19.62 L98.0 19.83 L96.0 19.81 L94.0 19.87 L92.0 19.75 L90.0 19.86 L88.0 19.52 L86.0 19.80 L84.0 20.10 L82.0 20.01 L80.0 20.09 L78.0 20.06 L76.0 20.00 L74.0 19.62 L72.0 19.44 L70.0 19.64 L68.0 19.41 L66.0 19.28 L64.0 19.08 L62.0 18.97 L60.0 19.25 L58.0 19.16 L56.0 19.47 L54.0 19.35 L52.0 19.09 L50.0 19.40 L48.0 19.39 L46.0 19.20 L44.0 19.39 L42.0 19.81 L40.0 19.89 L38.0 19.64 L36.0 19.89 L34.0 19.64 L32.0 19.41 L30.0 19.62 L28.0 19.53 L26.0 19.85 L24.0 19.80 L22.0 19.75 L20.0 19.82 L18.0 19.51 L16.0 19.29 L14.0 19.20 L12.0 19.27 L10.0 18.95 L8.0 18.85 L6.0 18.43 L4.0 18.13 L2.0 17.47 L0.0 16.72 Z" fill="#efefef"/></svg><svg class="r" style="left:4.00px;top:842.80px;" width="57" height="56" viewBox="0 0 57 56"><defs><filter id="u10" x="-20%" y="-20%" width="140%" height="140%"><feGaussianBlur stdDeviation="1.1"/></filter><clipPath id="cu10"><rect width="57" height="56"/></clipPath></defs><g clip-path="url(#cu10)"><rect width="57" height="56" fill="#ebe3db"/><g filter="url(#u10)"><path d="M36 14 L60 10 V60 H30 L38 34Z" fill="#d6b39b"/><path d="M-3 -3 H60 V3 H-3Z" fill="#f8f6f4"/><path d="M3 26 Q2 6 10 1 L48 0 Q57 6 57 28 L50 14 Q30 10 8 14Z" fill="#5e7048"/><path d="M12 1 L13 12 M19 0 L20 11 M26 0 L26 11 M33 0 L33 11 M40 0 L39 11 M47 1 L45 12" stroke="#3a4e2c" stroke-width="2.2"/><path d="M18 2 L22 10" stroke="#b8d0d8" stroke-width="2"/><ellipse cx="11.5" cy="17" rx="3.2" ry="3.5" fill="#3a2626"/><ellipse cx="42" cy="17.5" rx="3.2" ry="3.5" fill="#3a2626"/><ellipse cx="25" cy="36" rx="10" ry="7.5" fill="#4a3030"/><ellipse cx="26" cy="48" rx="12" ry="4" fill="#5a423c"/><ellipse cx="7" cy="40" rx="5" ry="12" fill="#f8f4f0"/><ellipse cx="25" cy="24" rx="9" ry="6" fill="#f6f2ee"/></g></g><circle cx="28.4" cy="28" r="14.6" fill="none" stroke="#38a038" stroke-width="3.2"/><path d="M24.8 21 L34.6 28 L24.8 35Z" fill="#38a038"/></svg><div class="t" style="left:67.30px;top:842px;font-size:11.85px;color:#f4f4f4;font-weight:normal;letter-spacing:-0.095px">Carmen Carreto _ Castañuelas.mp3</div><div class="t" style="right:681.00px;top:842px;font-size:11.85px;color:#f4f4f4;font-weight:normal;">17.54s</div><svg class="r" style="left:67.00px;top:853.00px;" width="266" height="32" viewBox="0 0 266 32"><path d="M0 16 L0 13.97 L1 12.10 L2 9.47 L3 7.76 L4 7.88 L5 8.94 L6 10.23 L7 12.53 L8 13.09 L9 11.76 L10 10.07 L11 8.79 L12 7.65 L13 6.19 L14 6.08 L15 7.71 L16 7.23 L17 5.50 L18 3.82 L19 5.21 L20 6.83 L21 8.14 L22 9.87 L23 11.67 L24 10.96 L25 9.89 L26 8.30 L27 6.95 L28 5.57 L29 3.96 L30 5.27 L31 6.04 L32 7.20 L33 8.49 L34 9.54 L35 10.65 L36 9.96 L37 8.62 L38 7.02 L39 5.81 L40 6.21 L41 7.57 L42 9.13 L43 10.35 L44 11.99 L45 13.18 L46 12.92 L47 11.54 L48 9.99 L49 8.49 L50 6.86 L51 7.40 L52 8.96 L53 7.24 L54 6.03 L55 4.48 L56 4.56 L57 6.27 L58 7.57 L59 7.43 L60 6.18 L61 6.48 L62 7.59 L63 9.19 L64 10.41 L65 11.81 L66 13.06 L67 13.12 L68 12.68 L69 11.13 L70 9.69 L71 8.22 L72 7.01 L73 8.12 L74 9.87 L75 9.08 L76 8.00 L77 6.55 L78 7.51 L79 9.04 L80 10.33 L81 8.24 L82 6.63 L83 5.37 L84 7.15 L85 9.03 L86 10.95 L87 12.82 L88 12.95 L89 12.30 L90 11.19 L91 9.79 L92 8.43 L93 6.91 L94 5.72 L95 5.49 L96 6.29 L97 6.46 L98 7.78 L99 8.90 L100 10.18 L101 11.45 L102 12.16 L103 10.73 L104 9.37 L105 8.09 L106 6.42 L107 5.70 L108 7.08 L109 8.35 L110 7.74 L111 5.73 L112 3.75 L113 2.49 L114 4.65 L115 6.52 L116 8.46 L117 8.22 L118 6.62 L119 5.16 L120 6.45 L121 8.04 L122 9.47 L123 10.95 L124 12.79 L125 12.10 L126 10.68 L127 9.04 L128 7.84 L129 6.20 L130 5.09 L131 6.44 L132 8.00 L133 9.43 L134 11.27 L135 12.52 L136 11.65 L137 10.73 L138 9.46 L139 8.51 L140 7.93 L141 7.36 L142 8.37 L143 10.06 L144 11.34 L145 12.68 L146 12.96 L147 11.83 L148 10.50 L149 8.78 L150 7.10 L151 5.64 L152 5.97 L153 7.51 L154 9.33 L155 10.54 L156 10.18 L157 8.80 L158 7.06 L159 5.39 L160 3.84 L161 4.29 L162 6.00 L163 7.29 L164 8.93 L165 10.62 L166 10.91 L167 9.40 L168 7.99 L169 6.33 L170 8.18 L171 9.37 L172 7.60 L173 5.67 L174 3.61 L175 3.37 L176 5.48 L177 6.99 L178 8.98 L179 11.00 L180 11.05 L181 8.80 L182 6.85 L183 4.64 L184 2.77 L185 3.59 L186 4.07 L187 5.37 L188 7.04 L189 8.72 L190 10.25 L191 10.69 L192 9.57 L193 8.58 L194 7.49 L195 7.70 L196 8.84 L197 9.62 L198 10.77 L199 9.82 L200 8.79 L201 7.69 L202 8.57 L203 9.44 L204 8.54 L205 6.86 L206 5.18 L207 3.65 L208 2.32 L209 4.00 L210 5.75 L211 7.50 L212 9.14 L213 10.79 L214 12.21 L215 11.40 L216 9.90 L217 8.50 L218 7.01 L219 5.52 L220 6.23 L221 7.76 L222 7.09 L223 5.33 L224 4.14 L225 5.99 L226 7.95 L227 9.96 L228 11.78 L229 10.05 L230 8.33 L231 6.79 L232 4.98 L233 3.08 L234 3.22 L235 5.02 L236 6.62 L237 8.28 L238 9.54 L239 8.46 L240 8.15 L241 9.57 L242 10.69 L243 12.09 L244 12.55 L245 11.52 L246 10.33 L247 8.80 L248 7.64 L249 6.50 L250 7.12 L251 8.21 L252 9.59 L253 8.47 L254 6.93 L255 4.99 L256 6.94 L257 8.72 L258 10.30 L259 9.99 L260 8.51 L261 6.92 L262 5.10 L263 6.24 L264 7.90 L265 9.28 L266 11.11 L266 22.10 L265 23.65 L264 25.33 L263 26.90 L262 25.99 L261 24.10 L260 22.74 L259 21.04 L258 22.61 L257 24.13 L256 26.03 L255 25.43 L254 23.82 L253 22.24 L252 23.35 L251 24.86 L250 26.36 L249 27.18 L248 25.33 L247 24.16 L246 22.56 L245 21.11 L244 19.36 L243 19.91 L242 21.52 L241 23.03 L240 24.49 L239 24.23 L238 23.03 L237 21.55 L236 22.42 L235 24.03 L234 25.58 L233 27.14 L232 28.54 L231 27.50 L230 25.66 L229 24.21 L228 22.61 L227 21.19 L226 22.61 L225 24.44 L224 26.06 L223 28.14 L222 26.44 L221 25.19 L220 26.84 L219 26.83 L218 25.33 L217 23.78 L216 22.17 L215 20.51 L214 20.88 L213 22.37 L212 23.66 L211 25.07 L210 26.58 L209 27.77 L208 26.83 L207 25.72 L206 24.22 L205 22.72 L204 21.34 L203 21.65 L202 23.05 L201 24.22 L200 24.57 L199 23.25 L198 23.54 L197 25.11 L196 26.31 L195 25.61 L194 24.07 L193 22.98 L192 21.65 L191 23.09 L190 25.02 L189 26.80 L188 28.34 L187 29.37 L186 27.68 L185 28.53 L184 26.31 L183 24.42 L182 22.52 L181 20.56 L180 20.57 L179 22.23 L178 23.87 L177 25.63 L176 27.23 L175 27.17 L174 25.20 L173 23.61 L172 22.28 L171 24.35 L170 26.07 L169 26.22 L168 24.45 L167 22.50 L166 20.57 L165 22.01 L164 23.38 L163 24.71 L162 25.82 L161 27.49 L160 26.31 L159 24.69 L158 23.53 L157 22.27 L156 20.62 L155 20.96 L154 22.69 L153 24.25 L152 25.69 L151 26.74 L150 25.01 L149 23.73 L148 22.11 L147 20.42 L146 19.82 L145 21.56 L144 23.25 L143 24.83 L142 25.36 L141 23.79 L140 23.87 L139 23.31 L138 22.17 L137 21.33 L136 20.26 L135 19.16 L134 20.28 L133 21.52 L132 22.80 L131 24.17 L130 25.61 L129 25.02 L128 23.57 L127 22.54 L126 21.29 L125 19.83 L124 19.20 L123 20.55 L122 22.06 L121 23.39 L120 25.11 L119 26.39 L118 25.81 L117 24.21 L116 23.35 L115 25.12 L114 26.87 L113 28.07 L112 26.35 L111 24.48 L110 23.79 L109 25.71 L108 27.29 L107 27.60 L106 25.93 L105 24.26 L104 22.68 L103 21.03 L102 19.24 L101 18.89 L100 20.02 L99 21.25 L98 22.42 L97 23.75 L96 24.91 L95 26.23 L94 26.12 L93 24.84 L92 23.54 L91 22.41 L90 21.06 L89 19.82 L88 19.00 L87 19.63 L86 21.39 L85 22.82 L84 24.75 L83 25.55 L82 23.70 L81 22.16 L80 22.48 L79 23.51 L78 24.85 L77 25.02 L76 23.77 L75 23.77 L74 25.81 L73 27.11 L72 25.27 L71 23.29 L70 21.11 L69 18.96 L68 18.83 L67 19.14 L66 19.19 L65 18.89 L64 20.01 L63 21.57 L62 23.12 L61 24.44 L60 26.13 L59 27.03 L58 25.81 L57 27.39 L56 26.72 L55 25.19 L54 24.07 L53 22.39 L52 21.44 L51 23.11 L50 24.58 L49 26.15 L48 24.50 L47 22.63 L46 21.06 L45 19.52 L44 20.43 L43 21.38 L42 22.50 L41 23.99 L40 24.82 L39 24.53 L38 23.51 L37 22.23 L36 21.93 L35 23.05 L34 24.20 L33 25.48 L32 25.97 L31 24.57 L30 23.65 L29 23.91 L28 24.74 L27 25.63 L26 24.49 L25 23.66 L24 22.64 L23 21.43 L22 22.44 L21 23.80 L20 25.13 L19 26.19 L18 24.77 L17 23.68 L16 23.60 L15 25.02 L14 25.83 L13 24.93 L12 23.48 L11 22.34 L10 20.76 L9 19.70 L8 18.87 L7 18.91 L6 19.10 L5 20.52 L4 21.87 L3 22.24 L2 22.40 L1 21.17 L0 18.83 Z" fill="#efefef"/></svg><svg class="r" style="left:4.00px;top:907.50px;" width="57" height="56" viewBox="0 0 57 56"><defs><filter id="u11" x="-20%" y="-20%" width="140%" height="140%"><feGaussianBlur stdDeviation="1.1"/></filter><clipPath id="cu11"><rect width="57" height="56"/></clipPath></defs><g clip-path="url(#cu11)"><rect width="57" height="56" fill="#ebe3db"/><g filter="url(#u11)"><path d="M36 14 L60 10 V60 H30 L38 34Z" fill="#d6b39b"/><path d="M-3 -3 H60 V3 H-3Z" fill="#f8f6f4"/><path d="M3 26 Q2 6 10 1 L48 0 Q57 6 57 28 L50 14 Q30 10 8 14Z" fill="#5e7048"/><path d="M12 1 L13 12 M19 0 L20 11 M26 0 L26 11 M33 0 L33 11 M40 0 L39 11 M47 1 L45 12" stroke="#3a4e2c" stroke-width="2.2"/><path d="M18 2 L22 10" stroke="#b8d0d8" stroke-width="2"/><ellipse cx="11.5" cy="17" rx="3.2" ry="3.5" fill="#3a2626"/><ellipse cx="42" cy="17.5" rx="3.2" ry="3.5" fill="#3a2626"/><ellipse cx="25" cy="36" rx="10" ry="7.5" fill="#4a3030"/><ellipse cx="26" cy="48" rx="12" ry="4" fill="#5a423c"/><ellipse cx="7" cy="40" rx="5" ry="12" fill="#f8f4f0"/><ellipse cx="25" cy="24" rx="9" ry="6" fill="#f6f2ee"/></g></g><circle cx="28.4" cy="28" r="14.6" fill="none" stroke="#38a038" stroke-width="3.2"/><path d="M24.8 21 L34.6 28 L24.8 35Z" fill="#38a038"/></svg><div class="t" style="left:67.30px;top:907px;font-size:11.85px;color:#f4f4f4;font-weight:normal;letter-spacing:0.023px">Pata Negra - Los Managers (256 kbps).mp3</div><div class="t" style="right:681.00px;top:907px;font-size:11.85px;color:#f4f4f4;font-weight:normal;">10.91s</div><svg class="r" style="left:67.00px;top:917.70px;" width="266" height="32" viewBox="0 0 266 32"><path d="M0 16 L0 15.15 L1 14.67 L2 14.19 L3 13.02 L4 12.03 L5 11.07 L6 11.32 L7 12.36 L8 11.48 L9 9.60 L10 8.10 L11 10.08 L12 11.59 L13 12.18 L14 11.58 L15 11.09 L16 11.29 L17 12.01 L18 11.36 L19 11.02 L20 11.32 L21 11.87 L22 12.47 L23 12.34 L24 12.33 L25 12.31 L26 11.21 L27 10.41 L28 9.31 L29 9.42 L30 10.44 L31 9.72 L32 8.35 L33 9.13 L34 10.23 L35 11.81 L36 12.57 L37 11.85 L38 11.49 L39 10.64 L40 10.63 L41 11.17 L42 11.84 L43 11.70 L44 10.62 L45 9.32 L46 8.61 L47 9.72 L48 10.88 L49 12.32 L50 12.24 L51 11.24 L52 10.31 L53 11.22 L54 11.86 L55 12.62 L56 11.93 L57 11.59 L58 11.12 L59 10.88 L60 10.59 L61 10.19 L62 11.04 L63 11.91 L64 11.81 L65 11.06 L66 10.82 L67 11.46 L68 11.76 L69 11.98 L70 11.37 L71 10.34 L72 9.67 L73 10.38 L74 10.91 L75 11.78 L76 11.64 L77 11.18 L78 10.82 L79 11.16 L80 11.67 L81 11.34 L82 10.68 L83 9.71 L84 8.84 L85 8.85 L86 9.69 L87 10.42 L88 10.94 L89 9.81 L90 8.38 L91 9.61 L92 10.77 L93 11.70 L94 12.38 L95 12.54 L96 12.69 L97 12.43 L98 11.64 L99 11.08 L100 10.33 L101 11.00 L102 11.13 L103 11.13 L104 11.78 L105 12.60 L106 12.36 L107 11.88 L108 11.40 L109 10.40 L110 9.80 L111 10.56 L112 11.36 L113 11.54 L114 11.31 L115 10.65 L116 10.72 L117 11.03 L118 11.32 L119 11.83 L120 12.28 L121 11.63 L122 10.81 L123 10.55 L124 9.51 L125 8.63 L126 8.64 L127 9.57 L128 10.40 L129 11.22 L130 9.68 L131 8.49 L132 9.93 L133 11.78 L134 11.75 L135 11.04 L136 10.36 L137 9.46 L138 9.41 L139 10.02 L140 10.88 L141 11.75 L142 12.55 L143 12.55 L144 12.05 L145 11.11 L146 10.13 L147 10.94 L148 11.83 L149 11.32 L150 10.21 L151 8.84 L152 9.26 L153 10.41 L154 11.30 L155 11.00 L156 11.14 L157 11.49 L158 12.11 L159 12.57 L160 12.60 L161 11.82 L162 10.82 L163 9.87 L164 10.69 L165 11.97 L166 11.82 L167 10.83 L168 10.24 L169 9.39 L170 9.59 L171 9.47 L172 8.99 L173 9.91 L174 10.54 L175 11.32 L176 12.07 L177 12.47 L178 11.70 L179 10.62 L180 9.72 L181 8.98 L182 9.68 L183 9.75 L184 8.77 L185 9.77 L186 10.67 L187 11.83 L188 12.33 L189 12.41 L190 11.37 L191 10.28 L192 9.37 L193 8.60 L194 9.00 L195 10.02 L196 11.03 L197 11.51 L198 11.19 L199 10.30 L200 9.73 L201 10.28 L202 10.71 L203 10.65 L204 10.13 L205 10.20 L206 9.81 L207 8.85 L208 8.61 L209 9.51 L210 10.56 L211 11.61 L212 11.74 L213 11.04 L214 10.04 L215 9.47 L216 9.94 L217 10.68 L218 11.30 L219 10.91 L220 10.94 L221 11.35 L222 11.91 L223 11.55 L224 11.12 L225 10.37 L226 9.65 L227 10.23 L228 10.70 L229 11.39 L230 12.31 L231 11.08 L232 10.47 L233 10.85 L234 11.49 L235 10.83 L236 10.20 L237 9.66 L238 9.19 L239 10.18 L240 10.88 L241 11.41 L242 11.72 L243 11.10 L244 10.64 L245 10.52 L246 11.22 L247 11.63 L248 12.05 L249 12.21 L250 11.64 L251 11.08 L252 10.47 L253 10.08 L254 9.65 L255 8.73 L256 9.25 L257 10.47 L258 11.61 L259 12.58 L260 12.68 L261 12.65 L262 12.39 L263 12.20 L264 11.36 L265 10.95 L266 10.97 L266 21.12 L265 21.85 L264 21.38 L263 20.42 L262 19.52 L261 19.56 L260 19.42 L259 20.13 L258 20.99 L257 21.97 L256 23.38 L255 22.67 L254 21.78 L253 22.54 L252 21.99 L251 21.44 L250 20.77 L249 20.07 L248 20.26 L247 20.98 L246 21.52 L245 21.99 L244 21.25 L243 20.82 L242 20.60 L241 21.04 L240 21.88 L239 22.49 L238 22.25 L237 21.28 L236 20.91 L235 19.98 L234 19.89 L233 21.07 L232 22.27 L231 21.59 L230 20.70 L229 21.38 L228 22.13 L227 22.57 L226 21.74 L225 20.98 L224 20.22 L223 20.12 L222 20.52 L221 21.08 L220 21.74 L219 22.05 L218 21.31 L217 21.68 L216 22.55 L215 21.63 L214 21.16 L213 20.31 L212 19.85 L211 20.66 L210 21.79 L209 22.91 L208 23.43 L207 22.70 L206 21.46 L205 22.37 L204 22.09 L203 21.78 L202 22.27 L201 22.70 L200 21.95 L199 21.38 L198 20.45 L197 20.48 L196 21.01 L195 21.78 L194 22.56 L193 22.30 L192 21.34 L191 20.63 L190 20.04 L189 19.32 L188 20.02 L187 21.10 L186 21.82 L185 23.03 L184 23.02 L183 21.87 L182 22.40 L181 21.71 L180 20.66 L179 20.14 L178 19.51 L177 19.47 L176 19.40 L175 19.75 L174 20.39 L173 21.21 L172 22.23 L171 22.94 L170 23.32 L169 22.33 L168 22.06 L167 21.20 L166 20.71 L165 21.64 L164 22.91 L163 21.91 L162 21.00 L161 19.69 L160 19.32 L159 19.31 L158 19.98 L157 20.44 L156 20.85 L155 21.36 L154 20.77 L153 20.10 L152 20.99 L151 21.91 L150 22.26 L149 21.26 L148 20.61 L147 21.88 L146 21.73 L145 20.66 L144 19.78 L143 19.34 L142 19.38 L141 19.63 L140 20.37 L139 20.69 L138 21.58 L137 22.14 L136 21.76 L135 21.23 L134 20.54 L133 20.64 L132 21.70 L131 22.28 L130 21.13 L129 20.17 L128 21.05 L127 21.94 L126 22.73 L125 22.92 L124 22.37 L123 22.04 L122 21.02 L121 19.97 L120 20.09 L119 20.70 L118 21.11 L117 21.22 L116 21.02 L115 20.69 L114 20.28 L113 20.01 L112 20.72 L111 21.99 L110 23.10 L109 22.43 L108 21.40 L107 19.96 L106 19.70 L105 19.38 L104 19.98 L103 21.12 L102 21.92 L101 21.29 L100 22.59 L99 21.93 L98 20.62 L97 19.88 L96 19.38 L95 19.57 L94 19.35 L93 19.47 L92 20.11 L91 21.42 L90 22.24 L89 23.12 L88 22.03 L87 21.60 L86 22.41 L85 22.02 L84 21.56 L83 20.92 L82 20.35 L81 19.55 L80 20.19 L79 20.78 L78 21.27 L77 21.83 L76 21.33 L75 20.70 L74 21.03 L73 21.60 L72 21.25 L71 20.68 L70 20.27 L69 19.77 L68 20.56 L67 20.93 L66 20.94 L65 20.57 L64 19.81 L63 20.64 L62 22.14 L61 22.90 L60 21.68 L59 21.80 L58 21.21 L57 20.31 L56 19.66 L55 19.64 L54 20.40 L53 21.55 L52 22.85 L51 21.48 L50 20.21 L49 20.62 L48 21.36 L47 22.44 L46 22.13 L45 21.23 L44 20.08 L43 19.62 L42 19.37 L41 20.00 L40 20.69 L39 21.68 L38 21.30 L37 20.56 L36 20.09 L35 21.21 L34 22.69 L33 24.06 L32 22.76 L31 21.40 L30 21.54 L29 22.48 L28 22.13 L27 21.20 L26 20.50 L25 19.49 L24 19.59 L23 19.33 L22 19.64 L21 20.39 L20 21.06 L19 21.76 L18 21.03 L17 20.39 L16 20.67 L15 21.53 L14 21.62 L13 20.64 L12 20.73 L11 22.27 L10 23.58 L9 21.80 L8 20.15 L7 20.18 L6 20.83 L5 20.66 L4 19.44 L3 18.51 L2 17.82 L1 17.31 L0 16.87 Z" fill="#efefef"/></svg><div class="r" style="left:0.00px;top:968.10px;width:340.00px;height:27.60px;background:#457ba0;"></div><div class="t" style="left:4.70px;top:975px;font-size:13.8px;color:#f4f4f4;font-weight:normal;letter-spacing:-0.09px">musicas 6<span class="o">o</span>B base</div><svg class="r" style="left:317.20px;top:973.30px;" width="18" height="18" viewBox="0 0 18 18"><circle cx="9" cy="9" r="7.4" fill="none" stroke="rgba(240,244,250,0.85)" stroke-width="1.5"/><path d="M7.7 5.6 L12.4 9 L7.7 12.4Z" fill="rgba(240,244,250,0.85)"/></svg><div class="r" style="left:0.00px;top:995.70px;width:340.00px;height:20.00px;background:#4db8ff;"></div><svg class="r" style="left:4.00px;top:1000.20px;" width="57" height="14" viewBox="0 0 57 14"><rect width="57" height="14" fill="#333"/><circle cx="28.3" cy="27.7" r="14.9" fill="none" stroke="#4db8ff" stroke-width="3"/></svg><div class="t" style="left:67.30px;top:999px;font-size:11.85px;color:#f4f4f4;font-weight:normal;letter-spacing:-0.133px">BASE Pata Negra - Los Managers</div><div class="t" style="right:681.00px;top:999px;font-size:11.85px;color:#f4f4f4;font-weight:normal;">3.77s</div><div class="r" style="left:0.00px;top:116.00px;width:1.00px;height:898.00px;background:rgba(255,255,255,0.12);"></div>
</body></html>
